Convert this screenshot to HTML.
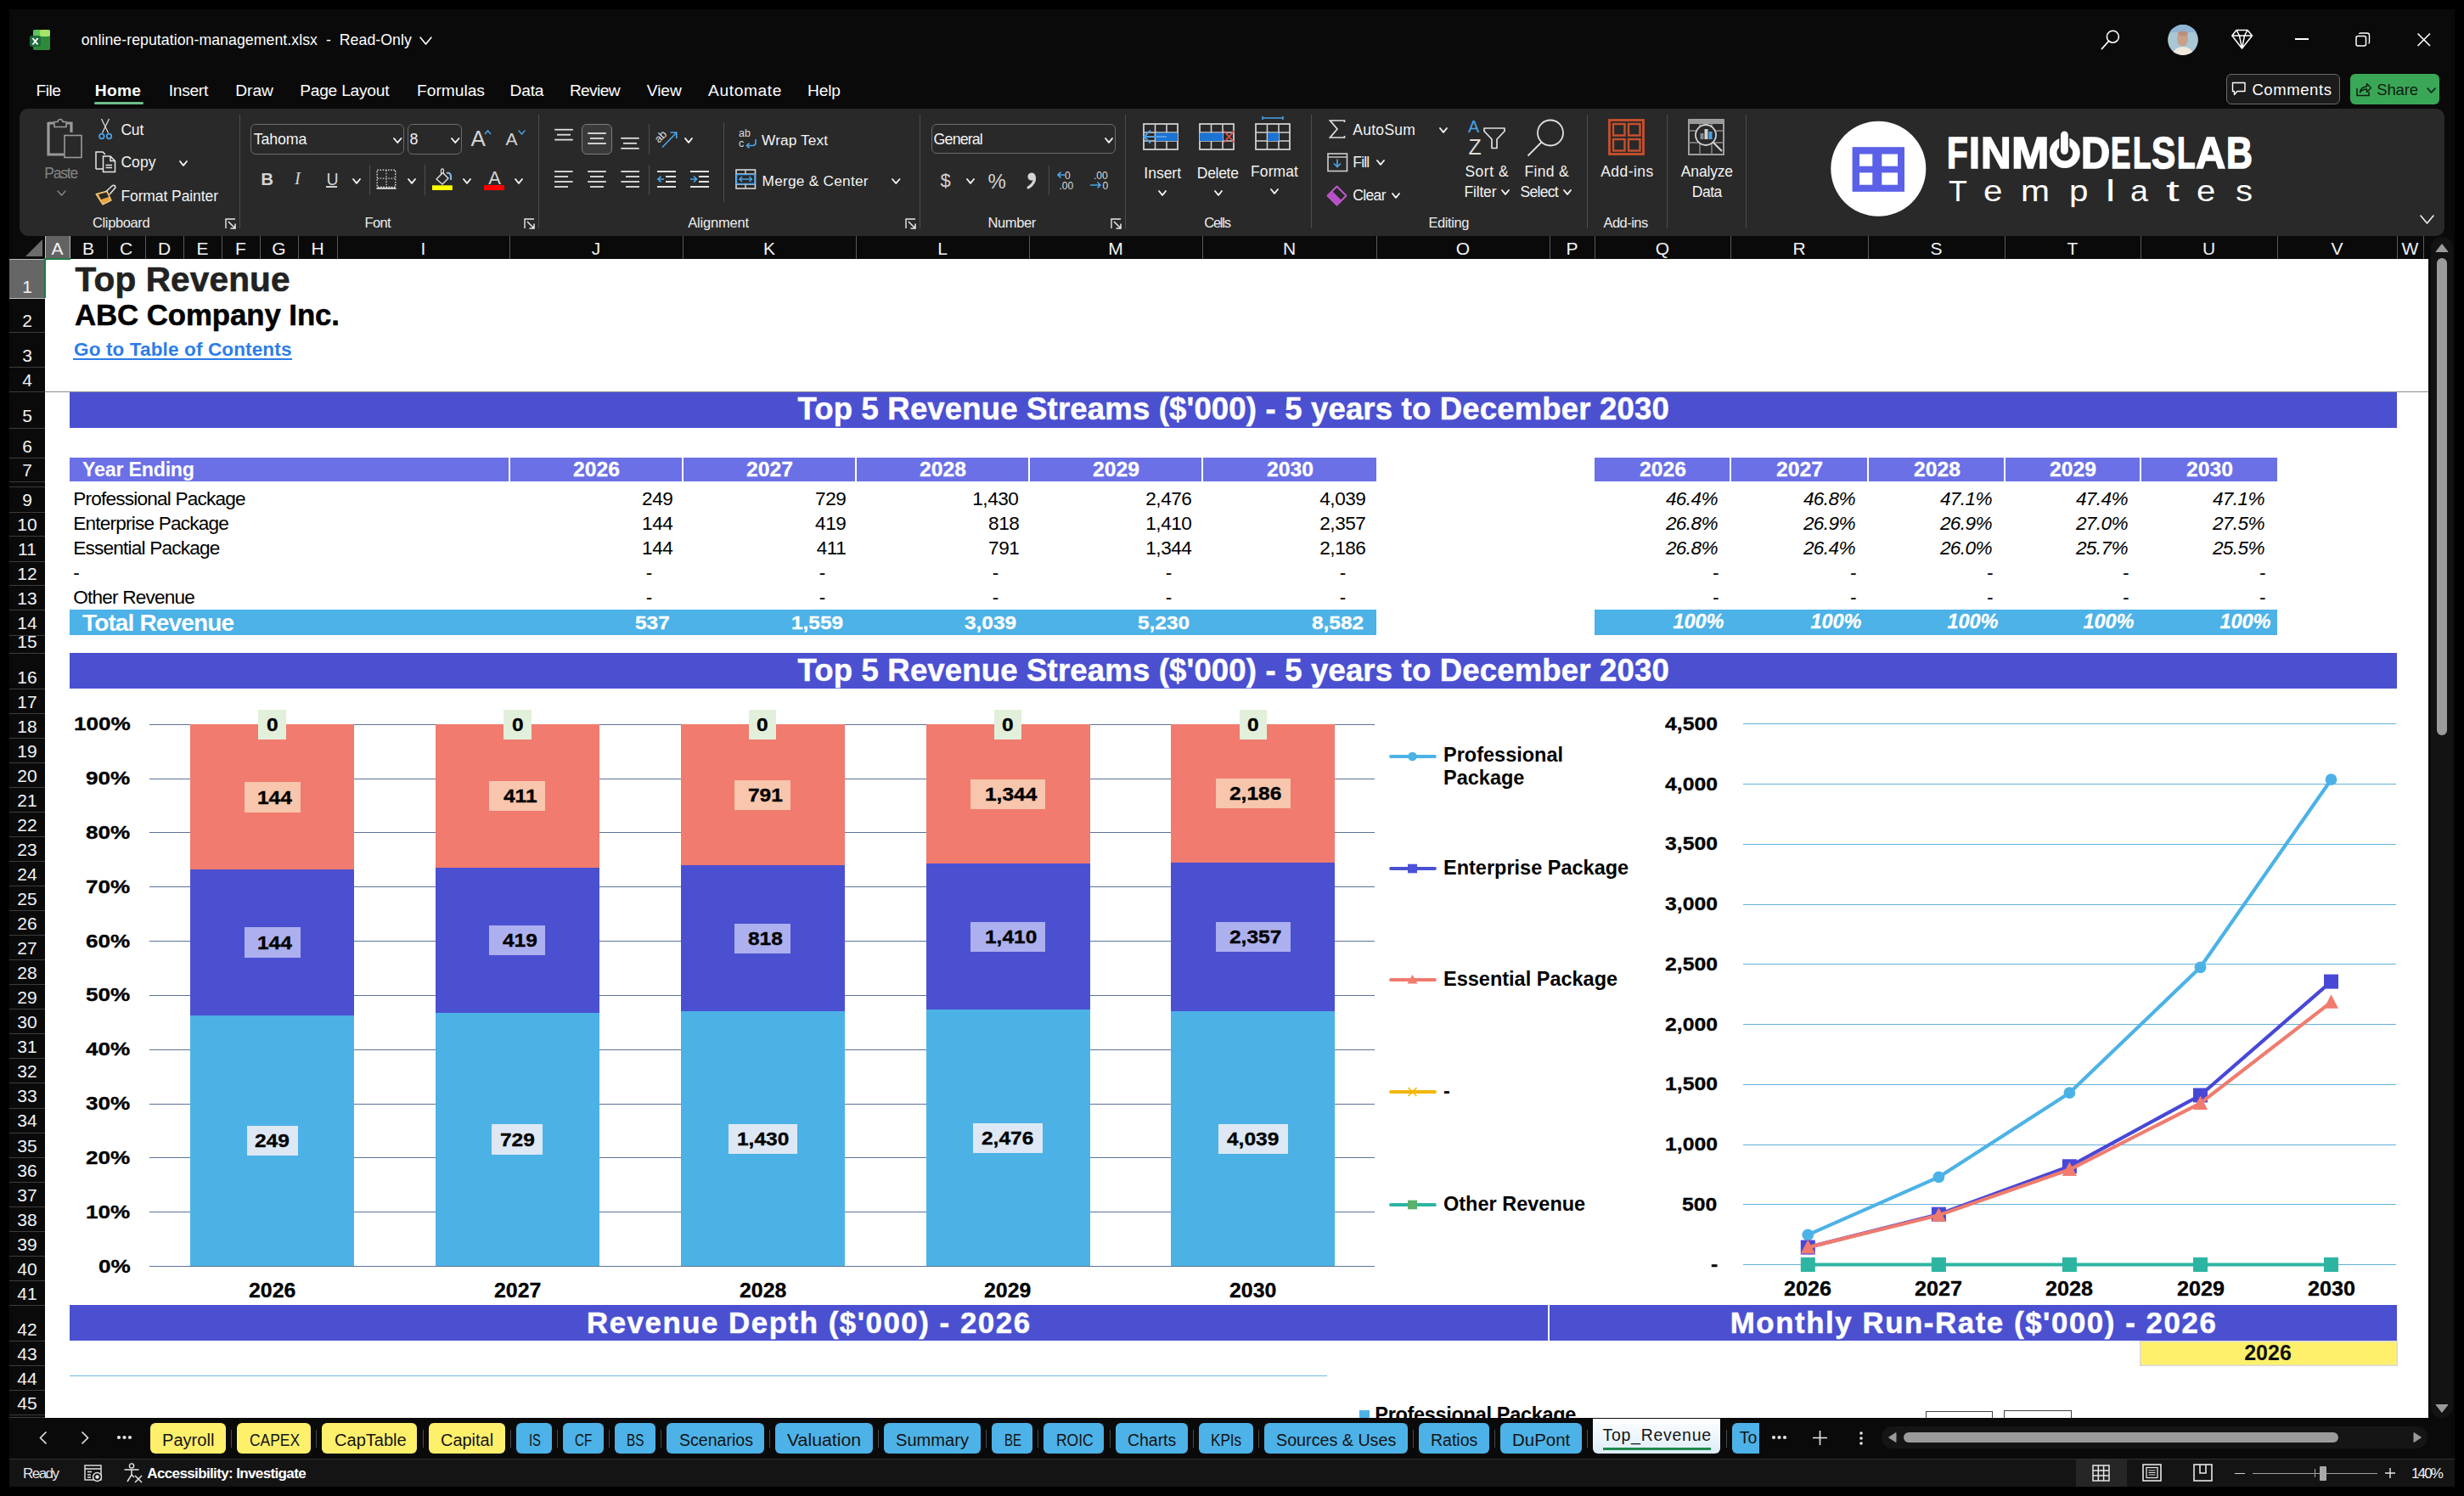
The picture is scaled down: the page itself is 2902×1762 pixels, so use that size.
<!DOCTYPE html>
<html><head><meta charset="utf-8"><title>Excel</title>
<style>
html,body{margin:0;padding:0;width:2902px;height:1762px;overflow:hidden;background:#000;}
.a{position:absolute;display:block;}
.t{white-space:pre;line-height:normal;}
svg.a{overflow:visible;}
</style></head><body>
<div class='a' style='left:11px;top:11px;width:2880px;height:1740px;background:#0a0a0a;'></div>
<div class='a' style='left:23px;top:128px;width:2856px;height:150px;background:#292929;border-radius:10px;'></div>
<div class='a' style='left:11px;top:278px;width:2849px;height:27px;background:#0a0a0a;'></div>
<div class='a' style='left:11px;top:305px;width:42px;height:1365px;background:#0a0a0a;'></div>
<div class='a' style='left:53px;top:305px;width:2807px;height:1365px;background:#ffffff;'></div>
<div class='a' style='left:2863px;top:279px;width:26px;height:1391px;background:#131313;border-radius:13px;'></div>
<div class='a' style='left:53px;top:278px;width:29px;height:27px;background:#636363;'></div>
<div class='a' style='left:82px;top:278px;width:1px;height:27px;background:#bdbdbd;'></div>
<span class="a t" style="left:60.5px;top:280.7px;font-family:'Liberation Sans', sans-serif;font-size:21px;font-weight:normal;font-style:normal;color:#f2f2f2;">A</span>
<div class='a' style='left:126px;top:278px;width:1px;height:27px;background:#5a5a5a;'></div>
<span class="a t" style="left:97.0px;top:280.7px;font-family:'Liberation Sans', sans-serif;font-size:21px;font-weight:normal;font-style:normal;color:#f2f2f2;">B</span>
<div class='a' style='left:171px;top:278px;width:1px;height:27px;background:#5a5a5a;'></div>
<span class="a t" style="left:140.9px;top:280.7px;font-family:'Liberation Sans', sans-serif;font-size:21px;font-weight:normal;font-style:normal;color:#f2f2f2;">C</span>
<div class='a' style='left:216px;top:278px;width:1px;height:27px;background:#5a5a5a;'></div>
<span class="a t" style="left:185.9px;top:280.7px;font-family:'Liberation Sans', sans-serif;font-size:21px;font-weight:normal;font-style:normal;color:#f2f2f2;">D</span>
<div class='a' style='left:261px;top:278px;width:1px;height:27px;background:#5a5a5a;'></div>
<span class="a t" style="left:231.5px;top:280.7px;font-family:'Liberation Sans', sans-serif;font-size:21px;font-weight:normal;font-style:normal;color:#f2f2f2;">E</span>
<div class='a' style='left:306px;top:278px;width:1px;height:27px;background:#5a5a5a;'></div>
<span class="a t" style="left:277.1px;top:280.7px;font-family:'Liberation Sans', sans-serif;font-size:21px;font-weight:normal;font-style:normal;color:#f2f2f2;">F</span>
<div class='a' style='left:351px;top:278px;width:1px;height:27px;background:#5a5a5a;'></div>
<span class="a t" style="left:320.3px;top:280.7px;font-family:'Liberation Sans', sans-serif;font-size:21px;font-weight:normal;font-style:normal;color:#f2f2f2;">G</span>
<div class='a' style='left:397px;top:278px;width:1px;height:27px;background:#5a5a5a;'></div>
<span class="a t" style="left:366.4px;top:280.7px;font-family:'Liberation Sans', sans-serif;font-size:21px;font-weight:normal;font-style:normal;color:#f2f2f2;">H</span>
<div class='a' style='left:600px;top:278px;width:1px;height:27px;background:#5a5a5a;'></div>
<span class="a t" style="left:495.6px;top:280.7px;font-family:'Liberation Sans', sans-serif;font-size:21px;font-weight:normal;font-style:normal;color:#f2f2f2;">I</span>
<div class='a' style='left:804px;top:278px;width:1px;height:27px;background:#5a5a5a;'></div>
<span class="a t" style="left:696.8px;top:280.7px;font-family:'Liberation Sans', sans-serif;font-size:21px;font-weight:normal;font-style:normal;color:#f2f2f2;">J</span>
<div class='a' style='left:1008px;top:278px;width:1px;height:27px;background:#5a5a5a;'></div>
<span class="a t" style="left:899.0px;top:280.7px;font-family:'Liberation Sans', sans-serif;font-size:21px;font-weight:normal;font-style:normal;color:#f2f2f2;">K</span>
<div class='a' style='left:1212px;top:278px;width:1px;height:27px;background:#5a5a5a;'></div>
<span class="a t" style="left:1104.2px;top:280.7px;font-family:'Liberation Sans', sans-serif;font-size:21px;font-weight:normal;font-style:normal;color:#f2f2f2;">L</span>
<div class='a' style='left:1416px;top:278px;width:1px;height:27px;background:#5a5a5a;'></div>
<span class="a t" style="left:1305.2px;top:280.7px;font-family:'Liberation Sans', sans-serif;font-size:21px;font-weight:normal;font-style:normal;color:#f2f2f2;">M</span>
<div class='a' style='left:1621px;top:278px;width:1px;height:27px;background:#5a5a5a;'></div>
<span class="a t" style="left:1510.9px;top:280.7px;font-family:'Liberation Sans', sans-serif;font-size:21px;font-weight:normal;font-style:normal;color:#f2f2f2;">N</span>
<div class='a' style='left:1825px;top:278px;width:1px;height:27px;background:#5a5a5a;'></div>
<span class="a t" style="left:1714.8px;top:280.7px;font-family:'Liberation Sans', sans-serif;font-size:21px;font-weight:normal;font-style:normal;color:#f2f2f2;">O</span>
<div class='a' style='left:1878px;top:278px;width:1px;height:27px;background:#5a5a5a;'></div>
<span class="a t" style="left:1844.5px;top:280.7px;font-family:'Liberation Sans', sans-serif;font-size:21px;font-weight:normal;font-style:normal;color:#f2f2f2;">P</span>
<div class='a' style='left:2038px;top:278px;width:1px;height:27px;background:#5a5a5a;'></div>
<span class="a t" style="left:1949.8px;top:280.7px;font-family:'Liberation Sans', sans-serif;font-size:21px;font-weight:normal;font-style:normal;color:#f2f2f2;">Q</span>
<div class='a' style='left:2200px;top:278px;width:1px;height:27px;background:#5a5a5a;'></div>
<span class="a t" style="left:2111.4px;top:280.7px;font-family:'Liberation Sans', sans-serif;font-size:21px;font-weight:normal;font-style:normal;color:#f2f2f2;">R</span>
<div class='a' style='left:2361px;top:278px;width:1px;height:27px;background:#5a5a5a;'></div>
<span class="a t" style="left:2273.5px;top:280.7px;font-family:'Liberation Sans', sans-serif;font-size:21px;font-weight:normal;font-style:normal;color:#f2f2f2;">S</span>
<div class='a' style='left:2521px;top:278px;width:1px;height:27px;background:#5a5a5a;'></div>
<span class="a t" style="left:2434.6px;top:280.7px;font-family:'Liberation Sans', sans-serif;font-size:21px;font-weight:normal;font-style:normal;color:#f2f2f2;">T</span>
<div class='a' style='left:2682px;top:278px;width:1px;height:27px;background:#5a5a5a;'></div>
<span class="a t" style="left:2593.9px;top:280.7px;font-family:'Liberation Sans', sans-serif;font-size:21px;font-weight:normal;font-style:normal;color:#f2f2f2;">U</span>
<div class='a' style='left:2823px;top:278px;width:1px;height:27px;background:#5a5a5a;'></div>
<span class="a t" style="left:2745.5px;top:280.7px;font-family:'Liberation Sans', sans-serif;font-size:21px;font-weight:normal;font-style:normal;color:#f2f2f2;">V</span>
<div class='a' style='left:2854px;top:278px;width:1px;height:27px;background:#5a5a5a;'></div>
<span class="a t" style="left:2828.6px;top:280.7px;font-family:'Liberation Sans', sans-serif;font-size:21px;font-weight:normal;font-style:normal;color:#f2f2f2;">W</span>
<div class='a' style='left:53px;top:278px;width:1px;height:27px;background:#bdbdbd;'></div>
<svg class='a' style='left:30px;top:282px;' width='21' height='21' viewBox='0 0 21 21'><polygon points='20,0 20,20 0,20' fill='#6b6b6b'/></svg>
<div class='a' style='left:11px;top:305px;width:42px;height:46px;background:#666666;'></div>
<div class='a' style='left:11px;top:351px;width:42px;height:1px;background:#bdbdbd;'></div>
<span class="a t" style="left:26.2px;top:325.9px;font-family:'Liberation Sans', sans-serif;font-size:21px;font-weight:normal;font-style:normal;color:#f2f2f2;">1</span>
<div class='a' style='left:11px;top:391px;width:42px;height:1px;background:#3c3c3c;'></div>
<span class="a t" style="left:26.2px;top:365.9px;font-family:'Liberation Sans', sans-serif;font-size:21px;font-weight:normal;font-style:normal;color:#f2f2f2;">2</span>
<div class='a' style='left:11px;top:432px;width:42px;height:1px;background:#3c3c3c;'></div>
<span class="a t" style="left:26.2px;top:406.9px;font-family:'Liberation Sans', sans-serif;font-size:21px;font-weight:normal;font-style:normal;color:#f2f2f2;">3</span>
<div class='a' style='left:11px;top:461px;width:42px;height:1px;background:#3c3c3c;'></div>
<span class="a t" style="left:26.2px;top:435.9px;font-family:'Liberation Sans', sans-serif;font-size:21px;font-weight:normal;font-style:normal;color:#f2f2f2;">4</span>
<div class='a' style='left:11px;top:503.5px;width:42px;height:1px;background:#3c3c3c;'></div>
<span class="a t" style="left:26.2px;top:478.4px;font-family:'Liberation Sans', sans-serif;font-size:21px;font-weight:normal;font-style:normal;color:#f2f2f2;">5</span>
<div class='a' style='left:11px;top:539px;width:42px;height:1px;background:#3c3c3c;'></div>
<span class="a t" style="left:26.2px;top:513.9px;font-family:'Liberation Sans', sans-serif;font-size:21px;font-weight:normal;font-style:normal;color:#f2f2f2;">6</span>
<div class='a' style='left:11px;top:567.3px;width:42px;height:1px;background:#3c3c3c;'></div>
<span class="a t" style="left:26.2px;top:542.2px;font-family:'Liberation Sans', sans-serif;font-size:21px;font-weight:normal;font-style:normal;color:#f2f2f2;">7</span>
<div class='a' style='left:11px;top:573.3px;width:42px;height:1px;background:#3c3c3c;'></div>
<div class='a' style='left:11px;top:602.5px;width:42px;height:1px;background:#3c3c3c;'></div>
<span class="a t" style="left:26.2px;top:577.4px;font-family:'Liberation Sans', sans-serif;font-size:21px;font-weight:normal;font-style:normal;color:#f2f2f2;">9</span>
<div class='a' style='left:11px;top:631.4px;width:42px;height:1px;background:#3c3c3c;'></div>
<span class="a t" style="left:20.3px;top:606.3px;font-family:'Liberation Sans', sans-serif;font-size:21px;font-weight:normal;font-style:normal;color:#f2f2f2;">10</span>
<div class='a' style='left:11px;top:660.5px;width:42px;height:1px;background:#3c3c3c;'></div>
<span class="a t" style="left:21.1px;top:635.4px;font-family:'Liberation Sans', sans-serif;font-size:21px;font-weight:normal;font-style:normal;color:#f2f2f2;">11</span>
<div class='a' style='left:11px;top:689.2px;width:42px;height:1px;background:#3c3c3c;'></div>
<span class="a t" style="left:20.3px;top:664.1px;font-family:'Liberation Sans', sans-serif;font-size:21px;font-weight:normal;font-style:normal;color:#f2f2f2;">12</span>
<div class='a' style='left:11px;top:718.2px;width:42px;height:1px;background:#3c3c3c;'></div>
<span class="a t" style="left:20.3px;top:693.1px;font-family:'Liberation Sans', sans-serif;font-size:21px;font-weight:normal;font-style:normal;color:#f2f2f2;">13</span>
<div class='a' style='left:11px;top:747.5px;width:42px;height:1px;background:#3c3c3c;'></div>
<span class="a t" style="left:20.3px;top:722.4px;font-family:'Liberation Sans', sans-serif;font-size:21px;font-weight:normal;font-style:normal;color:#f2f2f2;">14</span>
<div class='a' style='left:11px;top:769.4px;width:42px;height:1px;background:#3c3c3c;'></div>
<span class="a t" style="left:20.3px;top:744.3px;font-family:'Liberation Sans', sans-serif;font-size:21px;font-weight:normal;font-style:normal;color:#f2f2f2;">15</span>
<div class='a' style='left:11px;top:811px;width:42px;height:1px;background:#3c3c3c;'></div>
<span class="a t" style="left:20.3px;top:785.9px;font-family:'Liberation Sans', sans-serif;font-size:21px;font-weight:normal;font-style:normal;color:#f2f2f2;">16</span>
<div class='a' style='left:11px;top:840.03px;width:42px;height:1px;background:#3c3c3c;'></div>
<span class="a t" style="left:20.3px;top:814.9px;font-family:'Liberation Sans', sans-serif;font-size:21px;font-weight:normal;font-style:normal;color:#f2f2f2;">17</span>
<div class='a' style='left:11px;top:869.06px;width:42px;height:1px;background:#3c3c3c;'></div>
<span class="a t" style="left:20.3px;top:843.9px;font-family:'Liberation Sans', sans-serif;font-size:21px;font-weight:normal;font-style:normal;color:#f2f2f2;">18</span>
<div class='a' style='left:11px;top:898.09px;width:42px;height:1px;background:#3c3c3c;'></div>
<span class="a t" style="left:20.3px;top:873.0px;font-family:'Liberation Sans', sans-serif;font-size:21px;font-weight:normal;font-style:normal;color:#f2f2f2;">19</span>
<div class='a' style='left:11px;top:927.12px;width:42px;height:1px;background:#3c3c3c;'></div>
<span class="a t" style="left:20.3px;top:902.0px;font-family:'Liberation Sans', sans-serif;font-size:21px;font-weight:normal;font-style:normal;color:#f2f2f2;">20</span>
<div class='a' style='left:11px;top:956.15px;width:42px;height:1px;background:#3c3c3c;'></div>
<span class="a t" style="left:20.3px;top:931.0px;font-family:'Liberation Sans', sans-serif;font-size:21px;font-weight:normal;font-style:normal;color:#f2f2f2;">21</span>
<div class='a' style='left:11px;top:985.1800000000001px;width:42px;height:1px;background:#3c3c3c;'></div>
<span class="a t" style="left:20.3px;top:960.1px;font-family:'Liberation Sans', sans-serif;font-size:21px;font-weight:normal;font-style:normal;color:#f2f2f2;">22</span>
<div class='a' style='left:11px;top:1014.21px;width:42px;height:1px;background:#3c3c3c;'></div>
<span class="a t" style="left:20.3px;top:989.1px;font-family:'Liberation Sans', sans-serif;font-size:21px;font-weight:normal;font-style:normal;color:#f2f2f2;">23</span>
<div class='a' style='left:11px;top:1043.24px;width:42px;height:1px;background:#3c3c3c;'></div>
<span class="a t" style="left:20.3px;top:1018.1px;font-family:'Liberation Sans', sans-serif;font-size:21px;font-weight:normal;font-style:normal;color:#f2f2f2;">24</span>
<div class='a' style='left:11px;top:1072.27px;width:42px;height:1px;background:#3c3c3c;'></div>
<span class="a t" style="left:20.3px;top:1047.2px;font-family:'Liberation Sans', sans-serif;font-size:21px;font-weight:normal;font-style:normal;color:#f2f2f2;">25</span>
<div class='a' style='left:11px;top:1101.3px;width:42px;height:1px;background:#3c3c3c;'></div>
<span class="a t" style="left:20.3px;top:1076.2px;font-family:'Liberation Sans', sans-serif;font-size:21px;font-weight:normal;font-style:normal;color:#f2f2f2;">26</span>
<div class='a' style='left:11px;top:1130.33px;width:42px;height:1px;background:#3c3c3c;'></div>
<span class="a t" style="left:20.3px;top:1105.2px;font-family:'Liberation Sans', sans-serif;font-size:21px;font-weight:normal;font-style:normal;color:#f2f2f2;">27</span>
<div class='a' style='left:11px;top:1159.3600000000001px;width:42px;height:1px;background:#3c3c3c;'></div>
<span class="a t" style="left:20.3px;top:1134.2px;font-family:'Liberation Sans', sans-serif;font-size:21px;font-weight:normal;font-style:normal;color:#f2f2f2;">28</span>
<div class='a' style='left:11px;top:1188.3899999999999px;width:42px;height:1px;background:#3c3c3c;'></div>
<span class="a t" style="left:20.3px;top:1163.3px;font-family:'Liberation Sans', sans-serif;font-size:21px;font-weight:normal;font-style:normal;color:#f2f2f2;">29</span>
<div class='a' style='left:11px;top:1217.42px;width:42px;height:1px;background:#3c3c3c;'></div>
<span class="a t" style="left:20.3px;top:1192.3px;font-family:'Liberation Sans', sans-serif;font-size:21px;font-weight:normal;font-style:normal;color:#f2f2f2;">30</span>
<div class='a' style='left:11px;top:1246.45px;width:42px;height:1px;background:#3c3c3c;'></div>
<span class="a t" style="left:20.3px;top:1221.3px;font-family:'Liberation Sans', sans-serif;font-size:21px;font-weight:normal;font-style:normal;color:#f2f2f2;">31</span>
<div class='a' style='left:11px;top:1275.48px;width:42px;height:1px;background:#3c3c3c;'></div>
<span class="a t" style="left:20.3px;top:1250.4px;font-family:'Liberation Sans', sans-serif;font-size:21px;font-weight:normal;font-style:normal;color:#f2f2f2;">32</span>
<div class='a' style='left:11px;top:1304.51px;width:42px;height:1px;background:#3c3c3c;'></div>
<span class="a t" style="left:20.3px;top:1279.4px;font-family:'Liberation Sans', sans-serif;font-size:21px;font-weight:normal;font-style:normal;color:#f2f2f2;">33</span>
<div class='a' style='left:11px;top:1333.54px;width:42px;height:1px;background:#3c3c3c;'></div>
<span class="a t" style="left:20.3px;top:1308.4px;font-family:'Liberation Sans', sans-serif;font-size:21px;font-weight:normal;font-style:normal;color:#f2f2f2;">34</span>
<div class='a' style='left:11px;top:1362.5700000000002px;width:42px;height:1px;background:#3c3c3c;'></div>
<span class="a t" style="left:20.3px;top:1337.5px;font-family:'Liberation Sans', sans-serif;font-size:21px;font-weight:normal;font-style:normal;color:#f2f2f2;">35</span>
<div class='a' style='left:11px;top:1391.6px;width:42px;height:1px;background:#3c3c3c;'></div>
<span class="a t" style="left:20.3px;top:1366.5px;font-family:'Liberation Sans', sans-serif;font-size:21px;font-weight:normal;font-style:normal;color:#f2f2f2;">36</span>
<div class='a' style='left:11px;top:1420.63px;width:42px;height:1px;background:#3c3c3c;'></div>
<span class="a t" style="left:20.3px;top:1395.5px;font-family:'Liberation Sans', sans-serif;font-size:21px;font-weight:normal;font-style:normal;color:#f2f2f2;">37</span>
<div class='a' style='left:11px;top:1449.66px;width:42px;height:1px;background:#3c3c3c;'></div>
<span class="a t" style="left:20.3px;top:1424.5px;font-family:'Liberation Sans', sans-serif;font-size:21px;font-weight:normal;font-style:normal;color:#f2f2f2;">38</span>
<div class='a' style='left:11px;top:1478.69px;width:42px;height:1px;background:#3c3c3c;'></div>
<span class="a t" style="left:20.3px;top:1453.6px;font-family:'Liberation Sans', sans-serif;font-size:21px;font-weight:normal;font-style:normal;color:#f2f2f2;">39</span>
<div class='a' style='left:11px;top:1507.72px;width:42px;height:1px;background:#3c3c3c;'></div>
<span class="a t" style="left:20.3px;top:1482.6px;font-family:'Liberation Sans', sans-serif;font-size:21px;font-weight:normal;font-style:normal;color:#f2f2f2;">40</span>
<div class='a' style='left:11px;top:1536.75px;width:42px;height:1px;background:#3c3c3c;'></div>
<span class="a t" style="left:20.3px;top:1511.6px;font-family:'Liberation Sans', sans-serif;font-size:21px;font-weight:normal;font-style:normal;color:#f2f2f2;">41</span>
<div class='a' style='left:11px;top:1579px;width:42px;height:1px;background:#3c3c3c;'></div>
<span class="a t" style="left:20.3px;top:1553.9px;font-family:'Liberation Sans', sans-serif;font-size:21px;font-weight:normal;font-style:normal;color:#f2f2f2;">42</span>
<div class='a' style='left:11px;top:1608.3px;width:42px;height:1px;background:#3c3c3c;'></div>
<span class="a t" style="left:20.3px;top:1583.2px;font-family:'Liberation Sans', sans-serif;font-size:21px;font-weight:normal;font-style:normal;color:#f2f2f2;">43</span>
<div class='a' style='left:11px;top:1637.4px;width:42px;height:1px;background:#3c3c3c;'></div>
<span class="a t" style="left:20.3px;top:1612.3px;font-family:'Liberation Sans', sans-serif;font-size:21px;font-weight:normal;font-style:normal;color:#f2f2f2;">44</span>
<div class='a' style='left:11px;top:1666.3px;width:42px;height:1px;background:#3c3c3c;'></div>
<span class="a t" style="left:20.3px;top:1641.2px;font-family:'Liberation Sans', sans-serif;font-size:21px;font-weight:normal;font-style:normal;color:#f2f2f2;">45</span>
<div class='a' style='left:11px;top:1669px;width:42px;height:1px;background:#3c3c3c;'></div>
<div class='a' style='left:11px;top:304.5px;width:42px;height:1px;background:#bdbdbd;'></div>
<div class='a' style='left:52px;top:304px;width:2px;height:47px;background:#1f7a45;'></div>
<div class='a' style='left:52px;top:304px;width:31px;height:2px;background:#1f7a45;'></div>
<div class='a' style='left:53px;top:461px;width:2807px;height:1px;background:#8c8c8c;'></div>
<span class="a t" style="left:88.6px;top:305.6px;font-family:'Liberation Sans', sans-serif;font-size:40.6px;font-weight:bold;font-style:normal;color:#222222;letter-spacing:0.12px;-webkit-text-stroke:0.6px #222;">Top Revenue</span>
<span class="a t" style="left:88.0px;top:351.3px;font-family:'Liberation Sans', sans-serif;font-size:34.8px;font-weight:bold;font-style:normal;color:#000000;letter-spacing:-0.08px;-webkit-text-stroke:0.5px #000;">ABC Company Inc.</span>
<span class="a t" style="left:87.0px;top:399.1px;font-family:'Liberation Sans', sans-serif;font-size:22.5px;font-weight:bold;font-style:normal;color:#2b7de8;letter-spacing:0.14px;">Go to Table of Contents</span>
<div class='a' style='left:86px;top:422.3px;width:257.5px;height:2px;background:#2b7de8;'></div>
<div class='a' style='left:82px;top:461.7px;width:2741px;height:42px;background:#4b50d1;'></div>
<span class="a t" style="left:939.5px;top:461.2px;font-family:'Liberation Sans', sans-serif;font-size:36.5px;font-weight:bold;font-style:normal;color:#ffffff;letter-spacing:0.18px;-webkit-text-stroke:0.5px #fff;">Top 5 Revenue Streams ($'000) - 5 years to December 2030</span>
<div class='a' style='left:82px;top:539.2px;width:1539px;height:27.6px;background:#6b70e6;'></div>
<div class='a' style='left:1878px;top:539.2px;width:804px;height:27.6px;background:#6b70e6;'></div>
<div class='a' style='left:599px;top:539.2px;width:2px;height:27.6px;background:#ffffff;'></div>
<div class='a' style='left:803px;top:539.2px;width:2px;height:27.6px;background:#ffffff;'></div>
<div class='a' style='left:1007px;top:539.2px;width:2px;height:27.6px;background:#ffffff;'></div>
<div class='a' style='left:1211px;top:539.2px;width:2px;height:27.6px;background:#ffffff;'></div>
<div class='a' style='left:1415px;top:539.2px;width:2px;height:27.6px;background:#ffffff;'></div>
<div class='a' style='left:2037px;top:539.2px;width:2px;height:27.6px;background:#ffffff;'></div>
<div class='a' style='left:2199px;top:539.2px;width:2px;height:27.6px;background:#ffffff;'></div>
<div class='a' style='left:2360px;top:539.2px;width:2px;height:27.6px;background:#ffffff;'></div>
<div class='a' style='left:2520px;top:539.2px;width:2px;height:27.6px;background:#ffffff;'></div>
<span class="a t" style="left:97.0px;top:539.5px;font-family:'Liberation Sans', sans-serif;font-size:23.3px;font-weight:bold;font-style:normal;color:#ffffff;letter-spacing:-0.26px;">Year Ending</span>
<span class="a t" style="left:675.0px;top:539.5px;font-family:'Liberation Sans', sans-serif;font-size:23.3px;font-weight:bold;font-style:normal;color:#ffffff;transform:scaleX(1.0600);transform-origin:0 0;-webkit-text-stroke:0.3px #fff;">2026</span>
<span class="a t" style="left:879.0px;top:539.5px;font-family:'Liberation Sans', sans-serif;font-size:23.3px;font-weight:bold;font-style:normal;color:#ffffff;transform:scaleX(1.0600);transform-origin:0 0;-webkit-text-stroke:0.3px #fff;">2027</span>
<span class="a t" style="left:1083.0px;top:539.5px;font-family:'Liberation Sans', sans-serif;font-size:23.3px;font-weight:bold;font-style:normal;color:#ffffff;transform:scaleX(1.0600);transform-origin:0 0;-webkit-text-stroke:0.3px #fff;">2028</span>
<span class="a t" style="left:1287.0px;top:539.5px;font-family:'Liberation Sans', sans-serif;font-size:23.3px;font-weight:bold;font-style:normal;color:#ffffff;transform:scaleX(1.0600);transform-origin:0 0;-webkit-text-stroke:0.3px #fff;">2029</span>
<span class="a t" style="left:1491.5px;top:539.5px;font-family:'Liberation Sans', sans-serif;font-size:23.3px;font-weight:bold;font-style:normal;color:#ffffff;transform:scaleX(1.0600);transform-origin:0 0;-webkit-text-stroke:0.3px #fff;">2030</span>
<span class="a t" style="left:1931.0px;top:539.5px;font-family:'Liberation Sans', sans-serif;font-size:23.3px;font-weight:bold;font-style:normal;color:#ffffff;transform:scaleX(1.0600);transform-origin:0 0;-webkit-text-stroke:0.3px #fff;">2026</span>
<span class="a t" style="left:2092.0px;top:539.5px;font-family:'Liberation Sans', sans-serif;font-size:23.3px;font-weight:bold;font-style:normal;color:#ffffff;transform:scaleX(1.0600);transform-origin:0 0;-webkit-text-stroke:0.3px #fff;">2027</span>
<span class="a t" style="left:2253.5px;top:539.5px;font-family:'Liberation Sans', sans-serif;font-size:23.3px;font-weight:bold;font-style:normal;color:#ffffff;transform:scaleX(1.0600);transform-origin:0 0;-webkit-text-stroke:0.3px #fff;">2028</span>
<span class="a t" style="left:2414.0px;top:539.5px;font-family:'Liberation Sans', sans-serif;font-size:23.3px;font-weight:bold;font-style:normal;color:#ffffff;transform:scaleX(1.0600);transform-origin:0 0;-webkit-text-stroke:0.3px #fff;">2029</span>
<span class="a t" style="left:2574.5px;top:539.5px;font-family:'Liberation Sans', sans-serif;font-size:23.3px;font-weight:bold;font-style:normal;color:#ffffff;transform:scaleX(1.0600);transform-origin:0 0;-webkit-text-stroke:0.3px #fff;">2030</span>
<span class="a t" style="left:86.2px;top:574.9px;font-family:'Liberation Sans', sans-serif;font-size:22.6px;font-weight:normal;font-style:normal;color:#000000;letter-spacing:-0.8px;">Professional Package</span>
<span class="a t" style="left:756.1px;top:574.9px;font-family:'Liberation Sans', sans-serif;font-size:22.6px;font-weight:normal;font-style:normal;color:#000000;letter-spacing:-0.5px;">249</span>
<span class="a t" style="left:960.1px;top:574.9px;font-family:'Liberation Sans', sans-serif;font-size:22.6px;font-weight:normal;font-style:normal;color:#000000;letter-spacing:-0.5px;">729</span>
<span class="a t" style="left:1145.3px;top:574.9px;font-family:'Liberation Sans', sans-serif;font-size:22.6px;font-weight:normal;font-style:normal;color:#000000;letter-spacing:-0.5px;">1,430</span>
<span class="a t" style="left:1349.3px;top:574.9px;font-family:'Liberation Sans', sans-serif;font-size:22.6px;font-weight:normal;font-style:normal;color:#000000;letter-spacing:-0.5px;">2,476</span>
<span class="a t" style="left:1554.3px;top:574.9px;font-family:'Liberation Sans', sans-serif;font-size:22.6px;font-weight:normal;font-style:normal;color:#000000;letter-spacing:-0.5px;">4,039</span>
<span class="a t" style="left:1961.9px;top:574.9px;font-family:'Liberation Sans', sans-serif;font-size:22.6px;font-weight:normal;font-style:italic;color:#000000;letter-spacing:-0.6px;">46.4%</span>
<span class="a t" style="left:2123.9px;top:574.9px;font-family:'Liberation Sans', sans-serif;font-size:22.6px;font-weight:normal;font-style:italic;color:#000000;letter-spacing:-0.6px;">46.8%</span>
<span class="a t" style="left:2284.9px;top:574.9px;font-family:'Liberation Sans', sans-serif;font-size:22.6px;font-weight:normal;font-style:italic;color:#000000;letter-spacing:-0.6px;">47.1%</span>
<span class="a t" style="left:2444.9px;top:574.9px;font-family:'Liberation Sans', sans-serif;font-size:22.6px;font-weight:normal;font-style:italic;color:#000000;letter-spacing:-0.6px;">47.4%</span>
<span class="a t" style="left:2605.9px;top:574.9px;font-family:'Liberation Sans', sans-serif;font-size:22.6px;font-weight:normal;font-style:italic;color:#000000;letter-spacing:-0.6px;">47.1%</span>
<span class="a t" style="left:86.2px;top:603.8px;font-family:'Liberation Sans', sans-serif;font-size:22.6px;font-weight:normal;font-style:normal;color:#000000;letter-spacing:-0.8px;">Enterprise Package</span>
<span class="a t" style="left:756.1px;top:603.8px;font-family:'Liberation Sans', sans-serif;font-size:22.6px;font-weight:normal;font-style:normal;color:#000000;letter-spacing:-0.5px;">144</span>
<span class="a t" style="left:960.1px;top:603.8px;font-family:'Liberation Sans', sans-serif;font-size:22.6px;font-weight:normal;font-style:normal;color:#000000;letter-spacing:-0.5px;">419</span>
<span class="a t" style="left:1164.1px;top:603.8px;font-family:'Liberation Sans', sans-serif;font-size:22.6px;font-weight:normal;font-style:normal;color:#000000;letter-spacing:-0.5px;">818</span>
<span class="a t" style="left:1349.3px;top:603.8px;font-family:'Liberation Sans', sans-serif;font-size:22.6px;font-weight:normal;font-style:normal;color:#000000;letter-spacing:-0.5px;">1,410</span>
<span class="a t" style="left:1554.3px;top:603.8px;font-family:'Liberation Sans', sans-serif;font-size:22.6px;font-weight:normal;font-style:normal;color:#000000;letter-spacing:-0.5px;">2,357</span>
<span class="a t" style="left:1961.9px;top:603.8px;font-family:'Liberation Sans', sans-serif;font-size:22.6px;font-weight:normal;font-style:italic;color:#000000;letter-spacing:-0.6px;">26.8%</span>
<span class="a t" style="left:2123.9px;top:603.8px;font-family:'Liberation Sans', sans-serif;font-size:22.6px;font-weight:normal;font-style:italic;color:#000000;letter-spacing:-0.6px;">26.9%</span>
<span class="a t" style="left:2284.9px;top:603.8px;font-family:'Liberation Sans', sans-serif;font-size:22.6px;font-weight:normal;font-style:italic;color:#000000;letter-spacing:-0.6px;">26.9%</span>
<span class="a t" style="left:2444.9px;top:603.8px;font-family:'Liberation Sans', sans-serif;font-size:22.6px;font-weight:normal;font-style:italic;color:#000000;letter-spacing:-0.6px;">27.0%</span>
<span class="a t" style="left:2605.9px;top:603.8px;font-family:'Liberation Sans', sans-serif;font-size:22.6px;font-weight:normal;font-style:italic;color:#000000;letter-spacing:-0.6px;">27.5%</span>
<span class="a t" style="left:86.2px;top:632.9px;font-family:'Liberation Sans', sans-serif;font-size:22.6px;font-weight:normal;font-style:normal;color:#000000;letter-spacing:-0.8px;">Essential Package</span>
<span class="a t" style="left:756.1px;top:632.9px;font-family:'Liberation Sans', sans-serif;font-size:22.6px;font-weight:normal;font-style:normal;color:#000000;letter-spacing:-0.5px;">144</span>
<span class="a t" style="left:961.8px;top:632.9px;font-family:'Liberation Sans', sans-serif;font-size:22.6px;font-weight:normal;font-style:normal;color:#000000;letter-spacing:-0.5px;">411</span>
<span class="a t" style="left:1164.1px;top:632.9px;font-family:'Liberation Sans', sans-serif;font-size:22.6px;font-weight:normal;font-style:normal;color:#000000;letter-spacing:-0.5px;">791</span>
<span class="a t" style="left:1349.3px;top:632.9px;font-family:'Liberation Sans', sans-serif;font-size:22.6px;font-weight:normal;font-style:normal;color:#000000;letter-spacing:-0.5px;">1,344</span>
<span class="a t" style="left:1554.3px;top:632.9px;font-family:'Liberation Sans', sans-serif;font-size:22.6px;font-weight:normal;font-style:normal;color:#000000;letter-spacing:-0.5px;">2,186</span>
<span class="a t" style="left:1961.9px;top:632.9px;font-family:'Liberation Sans', sans-serif;font-size:22.6px;font-weight:normal;font-style:italic;color:#000000;letter-spacing:-0.6px;">26.8%</span>
<span class="a t" style="left:2123.9px;top:632.9px;font-family:'Liberation Sans', sans-serif;font-size:22.6px;font-weight:normal;font-style:italic;color:#000000;letter-spacing:-0.6px;">26.4%</span>
<span class="a t" style="left:2284.9px;top:632.9px;font-family:'Liberation Sans', sans-serif;font-size:22.6px;font-weight:normal;font-style:italic;color:#000000;letter-spacing:-0.6px;">26.0%</span>
<span class="a t" style="left:2444.9px;top:632.9px;font-family:'Liberation Sans', sans-serif;font-size:22.6px;font-weight:normal;font-style:italic;color:#000000;letter-spacing:-0.6px;">25.7%</span>
<span class="a t" style="left:2605.9px;top:632.9px;font-family:'Liberation Sans', sans-serif;font-size:22.6px;font-weight:normal;font-style:italic;color:#000000;letter-spacing:-0.6px;">25.5%</span>
<span class="a t" style="left:86.2px;top:661.6px;font-family:'Liberation Sans', sans-serif;font-size:22.6px;font-weight:normal;font-style:normal;color:#000000;letter-spacing:-0.8px;">-</span>
<span class="a t" style="left:760.7px;top:661.6px;font-family:'Liberation Sans', sans-serif;font-size:22.6px;font-weight:normal;font-style:normal;color:#000000;">-</span>
<span class="a t" style="left:964.7px;top:661.6px;font-family:'Liberation Sans', sans-serif;font-size:22.6px;font-weight:normal;font-style:normal;color:#000000;">-</span>
<span class="a t" style="left:1168.7px;top:661.6px;font-family:'Liberation Sans', sans-serif;font-size:22.6px;font-weight:normal;font-style:normal;color:#000000;">-</span>
<span class="a t" style="left:1372.7px;top:661.6px;font-family:'Liberation Sans', sans-serif;font-size:22.6px;font-weight:normal;font-style:normal;color:#000000;">-</span>
<span class="a t" style="left:1577.7px;top:661.6px;font-family:'Liberation Sans', sans-serif;font-size:22.6px;font-weight:normal;font-style:normal;color:#000000;">-</span>
<span class="a t" style="left:2016.7px;top:661.6px;font-family:'Liberation Sans', sans-serif;font-size:22.6px;font-weight:normal;font-style:italic;color:#000000;">-</span>
<span class="a t" style="left:2178.7px;top:661.6px;font-family:'Liberation Sans', sans-serif;font-size:22.6px;font-weight:normal;font-style:italic;color:#000000;">-</span>
<span class="a t" style="left:2339.7px;top:661.6px;font-family:'Liberation Sans', sans-serif;font-size:22.6px;font-weight:normal;font-style:italic;color:#000000;">-</span>
<span class="a t" style="left:2499.7px;top:661.6px;font-family:'Liberation Sans', sans-serif;font-size:22.6px;font-weight:normal;font-style:italic;color:#000000;">-</span>
<span class="a t" style="left:2660.7px;top:661.6px;font-family:'Liberation Sans', sans-serif;font-size:22.6px;font-weight:normal;font-style:italic;color:#000000;">-</span>
<span class="a t" style="left:86.2px;top:690.6px;font-family:'Liberation Sans', sans-serif;font-size:22.6px;font-weight:normal;font-style:normal;color:#000000;letter-spacing:-0.8px;">Other Revenue</span>
<span class="a t" style="left:760.7px;top:690.6px;font-family:'Liberation Sans', sans-serif;font-size:22.6px;font-weight:normal;font-style:normal;color:#000000;">-</span>
<span class="a t" style="left:964.7px;top:690.6px;font-family:'Liberation Sans', sans-serif;font-size:22.6px;font-weight:normal;font-style:normal;color:#000000;">-</span>
<span class="a t" style="left:1168.7px;top:690.6px;font-family:'Liberation Sans', sans-serif;font-size:22.6px;font-weight:normal;font-style:normal;color:#000000;">-</span>
<span class="a t" style="left:1372.7px;top:690.6px;font-family:'Liberation Sans', sans-serif;font-size:22.6px;font-weight:normal;font-style:normal;color:#000000;">-</span>
<span class="a t" style="left:1577.7px;top:690.6px;font-family:'Liberation Sans', sans-serif;font-size:22.6px;font-weight:normal;font-style:normal;color:#000000;">-</span>
<span class="a t" style="left:2016.7px;top:690.6px;font-family:'Liberation Sans', sans-serif;font-size:22.6px;font-weight:normal;font-style:italic;color:#000000;">-</span>
<span class="a t" style="left:2178.7px;top:690.6px;font-family:'Liberation Sans', sans-serif;font-size:22.6px;font-weight:normal;font-style:italic;color:#000000;">-</span>
<span class="a t" style="left:2339.7px;top:690.6px;font-family:'Liberation Sans', sans-serif;font-size:22.6px;font-weight:normal;font-style:italic;color:#000000;">-</span>
<span class="a t" style="left:2499.7px;top:690.6px;font-family:'Liberation Sans', sans-serif;font-size:22.6px;font-weight:normal;font-style:italic;color:#000000;">-</span>
<span class="a t" style="left:2660.7px;top:690.6px;font-family:'Liberation Sans', sans-serif;font-size:22.6px;font-weight:normal;font-style:italic;color:#000000;">-</span>
<div class='a' style='left:81.5px;top:718.1px;width:1539.5px;height:29.7px;background:#4cb2e7;'></div>
<div class='a' style='left:1878px;top:718.1px;width:804px;height:29.7px;background:#4cb2e7;'></div>
<span class="a t" style="left:97.0px;top:717.5px;font-family:'Liberation Sans', sans-serif;font-size:28px;font-weight:bold;font-style:normal;color:#ffffff;letter-spacing:-0.86px;">Total Revenue</span>
<span class="a t" style="left:748.0px;top:719.8px;font-family:'Liberation Sans', sans-serif;font-size:22.8px;font-weight:bold;font-style:normal;color:#ffffff;transform:scaleX(1.0700);transform-origin:0 0;-webkit-text-stroke:0.3px #fff;">537</span>
<span class="a t" style="left:931.6px;top:719.8px;font-family:'Liberation Sans', sans-serif;font-size:22.8px;font-weight:bold;font-style:normal;color:#ffffff;transform:scaleX(1.0700);transform-origin:0 0;-webkit-text-stroke:0.3px #fff;">1,559</span>
<span class="a t" style="left:1135.6px;top:719.8px;font-family:'Liberation Sans', sans-serif;font-size:22.8px;font-weight:bold;font-style:normal;color:#ffffff;transform:scaleX(1.0700);transform-origin:0 0;-webkit-text-stroke:0.3px #fff;">3,039</span>
<span class="a t" style="left:1339.6px;top:719.8px;font-family:'Liberation Sans', sans-serif;font-size:22.8px;font-weight:bold;font-style:normal;color:#ffffff;transform:scaleX(1.0700);transform-origin:0 0;-webkit-text-stroke:0.3px #fff;">5,230</span>
<span class="a t" style="left:1544.6px;top:719.8px;font-family:'Liberation Sans', sans-serif;font-size:22.8px;font-weight:bold;font-style:normal;color:#ffffff;transform:scaleX(1.0700);transform-origin:0 0;-webkit-text-stroke:0.3px #fff;">8,582</span>
<span class="a t" style="left:1970.4px;top:719.4px;font-family:'Liberation Sans', sans-serif;font-size:23.5px;font-weight:bold;font-style:italic;color:#ffffff;-webkit-text-stroke:0.3px #fff;">100%</span>
<span class="a t" style="left:2132.4px;top:719.4px;font-family:'Liberation Sans', sans-serif;font-size:23.5px;font-weight:bold;font-style:italic;color:#ffffff;-webkit-text-stroke:0.3px #fff;">100%</span>
<span class="a t" style="left:2293.4px;top:719.4px;font-family:'Liberation Sans', sans-serif;font-size:23.5px;font-weight:bold;font-style:italic;color:#ffffff;-webkit-text-stroke:0.3px #fff;">100%</span>
<span class="a t" style="left:2453.4px;top:719.4px;font-family:'Liberation Sans', sans-serif;font-size:23.5px;font-weight:bold;font-style:italic;color:#ffffff;-webkit-text-stroke:0.3px #fff;">100%</span>
<span class="a t" style="left:2614.4px;top:719.4px;font-family:'Liberation Sans', sans-serif;font-size:23.5px;font-weight:bold;font-style:italic;color:#ffffff;-webkit-text-stroke:0.3px #fff;">100%</span>
<div class='a' style='left:82px;top:769.4px;width:2741px;height:41.6px;background:#4b50d1;'></div>
<span class="a t" style="left:939.5px;top:768.7px;font-family:'Liberation Sans', sans-serif;font-size:36.5px;font-weight:bold;font-style:normal;color:#ffffff;letter-spacing:0.18px;-webkit-text-stroke:0.5px #fff;">Top 5 Revenue Streams ($'000) - 5 years to December 2030</span>
<div class='a' style='left:82px;top:1536.9px;width:2741px;height:42.2px;background:#4b50d1;'></div>
<div class='a' style='left:1823px;top:1536.9px;width:2px;height:42.2px;background:#ffffff;'></div>
<span class="a t" style="left:691.0px;top:1537.5px;font-family:'Liberation Sans', sans-serif;font-size:34.8px;font-weight:bold;font-style:normal;color:#ffffff;letter-spacing:1.55px;-webkit-text-stroke:0.5px #fff;">Revenue Depth ($'000) - 2026</span>
<span class="a t" style="left:2037.8px;top:1537.5px;font-family:'Liberation Sans', sans-serif;font-size:34.8px;font-weight:bold;font-style:normal;color:#ffffff;letter-spacing:1.58px;-webkit-text-stroke:0.5px #fff;">Monthly Run-Rate ($'000) - 2026</span>
<div class='a' style='left:2519.5px;top:1578.5px;width:304px;height:30px;background:#fff06b;box-shadow: inset 0 0 0 1.5px #d9d9d9;'></div>
<span class="a t" style="left:2643.2px;top:1579.0px;font-family:'Liberation Sans', sans-serif;font-size:25px;font-weight:bold;font-style:normal;color:#111111;">2026</span>
<div class='a' style='left:82px;top:1619.8px;width:1481px;height:1.2px;background:#6cbce0;'></div>
<div class='a' style='left:1600.8px;top:1661px;width:12px;height:9px;background:#4cb2e7;'></div>
<span class="a t" style="left:1619.3px;top:1652.6px;font-family:'Liberation Sans', sans-serif;font-size:23.5px;font-weight:bold;font-style:normal;color:#000000;letter-spacing:-0.31px;">Professional Package</span>
<div class='a' style='left:2268px;top:1662px;width:77px;height:20px;border:1.5px solid #444;background:#fff'></div>
<div class='a' style='left:2359.5px;top:1660.5px;width:78px;height:20px;border:1.5px solid #444;background:#fff'></div>
<div class='a' style='left:175.5px;top:853px;width:1443.5px;height:1px;background:#5b7399;'></div>
<div class='a' style='left:175.5px;top:917px;width:1443.5px;height:1px;background:#5b7399;'></div>
<div class='a' style='left:175.5px;top:980px;width:1443.5px;height:1px;background:#5b7399;'></div>
<div class='a' style='left:175.5px;top:1044px;width:1443.5px;height:1px;background:#5b7399;'></div>
<div class='a' style='left:175.5px;top:1108px;width:1443.5px;height:1px;background:#5b7399;'></div>
<div class='a' style='left:175.5px;top:1172px;width:1443.5px;height:1px;background:#5b7399;'></div>
<div class='a' style='left:175.5px;top:1236px;width:1443.5px;height:1px;background:#5b7399;'></div>
<div class='a' style='left:175.5px;top:1300px;width:1443.5px;height:1px;background:#5b7399;'></div>
<div class='a' style='left:175.5px;top:1363px;width:1443.5px;height:1px;background:#5b7399;'></div>
<div class='a' style='left:175.5px;top:1427px;width:1443.5px;height:1px;background:#5b7399;'></div>
<div class='a' style='left:175.5px;top:1491px;width:1443.5px;height:1px;background:#5b7399;'></div>
<span class="a t" style="left:86.7px;top:840.3px;font-family:'Liberation Sans', sans-serif;font-size:22.3px;font-weight:bold;font-style:normal;color:#000000;transform:scaleX(1.1700);transform-origin:0 0;-webkit-text-stroke:0.3px #000;">100%</span>
<span class="a t" style="left:101.2px;top:904.3px;font-family:'Liberation Sans', sans-serif;font-size:22.3px;font-weight:bold;font-style:normal;color:#000000;transform:scaleX(1.1700);transform-origin:0 0;-webkit-text-stroke:0.3px #000;">90%</span>
<span class="a t" style="left:101.2px;top:968.3px;font-family:'Liberation Sans', sans-serif;font-size:22.3px;font-weight:bold;font-style:normal;color:#000000;transform:scaleX(1.1700);transform-origin:0 0;-webkit-text-stroke:0.3px #000;">80%</span>
<span class="a t" style="left:101.2px;top:1032.3px;font-family:'Liberation Sans', sans-serif;font-size:22.3px;font-weight:bold;font-style:normal;color:#000000;transform:scaleX(1.1700);transform-origin:0 0;-webkit-text-stroke:0.3px #000;">70%</span>
<span class="a t" style="left:101.2px;top:1096.3px;font-family:'Liberation Sans', sans-serif;font-size:22.3px;font-weight:bold;font-style:normal;color:#000000;transform:scaleX(1.1700);transform-origin:0 0;-webkit-text-stroke:0.3px #000;">60%</span>
<span class="a t" style="left:101.2px;top:1159.3px;font-family:'Liberation Sans', sans-serif;font-size:22.3px;font-weight:bold;font-style:normal;color:#000000;transform:scaleX(1.1700);transform-origin:0 0;-webkit-text-stroke:0.3px #000;">50%</span>
<span class="a t" style="left:101.2px;top:1223.3px;font-family:'Liberation Sans', sans-serif;font-size:22.3px;font-weight:bold;font-style:normal;color:#000000;transform:scaleX(1.1700);transform-origin:0 0;-webkit-text-stroke:0.3px #000;">40%</span>
<span class="a t" style="left:101.2px;top:1287.3px;font-family:'Liberation Sans', sans-serif;font-size:22.3px;font-weight:bold;font-style:normal;color:#000000;transform:scaleX(1.1700);transform-origin:0 0;-webkit-text-stroke:0.3px #000;">30%</span>
<span class="a t" style="left:101.2px;top:1351.3px;font-family:'Liberation Sans', sans-serif;font-size:22.3px;font-weight:bold;font-style:normal;color:#000000;transform:scaleX(1.1700);transform-origin:0 0;-webkit-text-stroke:0.3px #000;">20%</span>
<span class="a t" style="left:101.2px;top:1415.3px;font-family:'Liberation Sans', sans-serif;font-size:22.3px;font-weight:bold;font-style:normal;color:#000000;transform:scaleX(1.1700);transform-origin:0 0;-webkit-text-stroke:0.3px #000;">10%</span>
<span class="a t" style="left:115.7px;top:1479.3px;font-family:'Liberation Sans', sans-serif;font-size:22.3px;font-weight:bold;font-style:normal;color:#000000;transform:scaleX(1.1700);transform-origin:0 0;-webkit-text-stroke:0.3px #000;">0%</span>
<div class='a' style='left:224.0px;top:1195.5748603351956px;width:193px;height:295.9251396648045px;background:#4cb2e6;'></div>
<div class='a' style='left:224.0px;top:1024.4374301675978px;width:193px;height:171.13743016759778px;background:#4b50d1;'></div>
<div class='a' style='left:224.0px;top:853.3px;width:193px;height:171.1374301675978px;background:#f07b6e;'></div>
<div class='a' style='left:290.5px;top:1325.737430167598px;width:60px;height:35.6px;background:#dde8f4;'></div>
<span class="a t" style="left:300.1px;top:1330.4px;font-family:'Liberation Sans', sans-serif;font-size:22.9px;font-weight:bold;font-style:normal;color:#000000;transform:scaleX(1.0700);transform-origin:0 0;-webkit-text-stroke:0.35px #000;">249</span>
<div class='a' style='left:287.5px;top:1092.2061452513967px;width:66px;height:35.6px;background:#adb0ef;'></div>
<span class="a t" style="left:303.3px;top:1096.8px;font-family:'Liberation Sans', sans-serif;font-size:22.9px;font-weight:bold;font-style:normal;color:#000000;transform:scaleX(1.0700);transform-origin:0 0;-webkit-text-stroke:0.35px #000;">144</span>
<div class='a' style='left:287.5px;top:921.0687150837989px;width:66px;height:35.6px;background:#f7c6ad;'></div>
<span class="a t" style="left:303.3px;top:925.7px;font-family:'Liberation Sans', sans-serif;font-size:22.9px;font-weight:bold;font-style:normal;color:#000000;transform:scaleX(1.0700);transform-origin:0 0;-webkit-text-stroke:0.35px #000;">144</span>
<div class='a' style='left:304.2px;top:835.5px;width:32.6px;height:35.6px;background:#e2efda;'></div>
<span class="a t" style="left:313.7px;top:840.1px;font-family:'Liberation Sans', sans-serif;font-size:22.9px;font-weight:bold;font-style:normal;color:#000000;transform:scaleX(1.0700);transform-origin:0 0;-webkit-text-stroke:0.35px #000;">0</span>
<span class="a t" style="left:292.9px;top:1506.8px;font-family:'Liberation Sans', sans-serif;font-size:23px;font-weight:bold;font-style:normal;color:#000000;transform:scaleX(1.0800);transform-origin:0 0;-webkit-text-stroke:0.3px #000;">2026</span>
<div class='a' style='left:512.85px;top:1193.0729313662605px;width:193px;height:298.4270686337396px;background:#4cb2e6;'></div>
<div class='a' style='left:512.85px;top:1021.5490057729314px;width:193px;height:171.5239255933291px;background:#4b50d1;'></div>
<div class='a' style='left:512.85px;top:853.3px;width:193px;height:168.24900577293147px;background:#f07b6e;'></div>
<div class='a' style='left:579.35px;top:1324.4864656831303px;width:60px;height:35.6px;background:#dde8f4;'></div>
<span class="a t" style="left:588.9px;top:1329.1px;font-family:'Liberation Sans', sans-serif;font-size:22.9px;font-weight:bold;font-style:normal;color:#000000;transform:scaleX(1.0700);transform-origin:0 0;-webkit-text-stroke:0.35px #000;">729</span>
<div class='a' style='left:576.35px;top:1089.510968569596px;width:66px;height:35.6px;background:#adb0ef;'></div>
<span class="a t" style="left:592.1px;top:1094.1px;font-family:'Liberation Sans', sans-serif;font-size:22.9px;font-weight:bold;font-style:normal;color:#000000;transform:scaleX(1.0700);transform-origin:0 0;-webkit-text-stroke:0.35px #000;">419</span>
<div class='a' style='left:576.35px;top:919.6245028864657px;width:66px;height:35.6px;background:#f7c6ad;'></div>
<span class="a t" style="left:592.8px;top:924.3px;font-family:'Liberation Sans', sans-serif;font-size:22.9px;font-weight:bold;font-style:normal;color:#000000;transform:scaleX(1.0700);transform-origin:0 0;-webkit-text-stroke:0.35px #000;">411</span>
<div class='a' style='left:593.0500000000001px;top:835.5px;width:32.6px;height:35.6px;background:#e2efda;'></div>
<span class="a t" style="left:602.5px;top:840.1px;font-family:'Liberation Sans', sans-serif;font-size:22.9px;font-weight:bold;font-style:normal;color:#000000;transform:scaleX(1.0700);transform-origin:0 0;-webkit-text-stroke:0.35px #000;">0</span>
<span class="a t" style="left:581.7px;top:1506.8px;font-family:'Liberation Sans', sans-serif;font-size:23px;font-weight:bold;font-style:normal;color:#000000;transform:scaleX(1.0800);transform-origin:0 0;-webkit-text-stroke:0.3px #000;">2027</span>
<div class='a' style='left:801.7px;top:1191.1952945047713px;width:193px;height:300.30470549522875px;background:#4cb2e6;'></div>
<div class='a' style='left:801.7px;top:1019.4126028298782px;width:193px;height:171.78269167489307px;background:#4b50d1;'></div>
<div class='a' style='left:801.7px;top:853.3px;width:193px;height:166.11260282987826px;background:#f07b6e;'></div>
<div class='a' style='left:857.5500000000001px;top:1323.5476472523858px;width:81.3px;height:35.6px;background:#dde8f4;'></div>
<span class="a t" style="left:867.5px;top:1328.2px;font-family:'Liberation Sans', sans-serif;font-size:22.9px;font-weight:bold;font-style:normal;color:#000000;transform:scaleX(1.0700);transform-origin:0 0;-webkit-text-stroke:0.35px #000;">1,430</span>
<div class='a' style='left:865.2px;top:1087.5039486673247px;width:66px;height:35.6px;background:#adb0ef;'></div>
<span class="a t" style="left:881.0px;top:1092.1px;font-family:'Liberation Sans', sans-serif;font-size:22.9px;font-weight:bold;font-style:normal;color:#000000;transform:scaleX(1.0700);transform-origin:0 0;-webkit-text-stroke:0.35px #000;">818</span>
<div class='a' style='left:865.2px;top:918.5563014149391px;width:66px;height:35.6px;background:#f7c6ad;'></div>
<span class="a t" style="left:881.0px;top:923.2px;font-family:'Liberation Sans', sans-serif;font-size:22.9px;font-weight:bold;font-style:normal;color:#000000;transform:scaleX(1.0700);transform-origin:0 0;-webkit-text-stroke:0.35px #000;">791</span>
<div class='a' style='left:881.9000000000001px;top:835.5px;width:32.6px;height:35.6px;background:#e2efda;'></div>
<span class="a t" style="left:891.4px;top:840.1px;font-family:'Liberation Sans', sans-serif;font-size:22.9px;font-weight:bold;font-style:normal;color:#000000;transform:scaleX(1.0700);transform-origin:0 0;-webkit-text-stroke:0.35px #000;">0</span>
<span class="a t" style="left:870.6px;top:1506.8px;font-family:'Liberation Sans', sans-serif;font-size:23px;font-weight:bold;font-style:normal;color:#000000;transform:scaleX(1.0800);transform-origin:0 0;-webkit-text-stroke:0.3px #000;">2028</span>
<div class='a' style='left:1090.5500000000002px;top:1189.3617208413002px;width:193px;height:302.13827915869985px;background:#4cb2e6;'></div>
<div class='a' style='left:1090.5500000000002px;top:1017.3039770554493px;width:193px;height:172.05774378585087px;background:#4b50d1;'></div>
<div class='a' style='left:1090.5500000000002px;top:853.3px;width:193px;height:164.00397705544935px;background:#f07b6e;'></div>
<div class='a' style='left:1146.4px;top:1322.6308604206502px;width:81.3px;height:35.6px;background:#dde8f4;'></div>
<span class="a t" style="left:1156.4px;top:1327.3px;font-family:'Liberation Sans', sans-serif;font-size:22.9px;font-weight:bold;font-style:normal;color:#000000;transform:scaleX(1.0700);transform-origin:0 0;-webkit-text-stroke:0.35px #000;">2,476</span>
<div class='a' style='left:1143.3000000000002px;top:1085.5328489483747px;width:87.5px;height:35.6px;background:#adb0ef;'></div>
<span class="a t" style="left:1159.6px;top:1090.2px;font-family:'Liberation Sans', sans-serif;font-size:22.9px;font-weight:bold;font-style:normal;color:#000000;transform:scaleX(1.0700);transform-origin:0 0;-webkit-text-stroke:0.35px #000;">1,410</span>
<div class='a' style='left:1143.3000000000002px;top:917.5019885277247px;width:87.5px;height:35.6px;background:#f7c6ad;'></div>
<span class="a t" style="left:1159.6px;top:922.1px;font-family:'Liberation Sans', sans-serif;font-size:22.9px;font-weight:bold;font-style:normal;color:#000000;transform:scaleX(1.0700);transform-origin:0 0;-webkit-text-stroke:0.35px #000;">1,344</span>
<div class='a' style='left:1170.7500000000002px;top:835.5px;width:32.6px;height:35.6px;background:#e2efda;'></div>
<span class="a t" style="left:1180.2px;top:840.1px;font-family:'Liberation Sans', sans-serif;font-size:22.9px;font-weight:bold;font-style:normal;color:#000000;transform:scaleX(1.0700);transform-origin:0 0;-webkit-text-stroke:0.35px #000;">0</span>
<span class="a t" style="left:1159.4px;top:1506.8px;font-family:'Liberation Sans', sans-serif;font-size:23px;font-weight:bold;font-style:normal;color:#000000;transform:scaleX(1.0800);transform-origin:0 0;-webkit-text-stroke:0.3px #000;">2029</span>
<div class='a' style='left:1379.4px;top:1191.1399673735725px;width:193px;height:300.3600326264274px;background:#4cb2e6;'></div>
<div class='a' style='left:1379.4px;top:1015.8617804707526px;width:193px;height:175.27818690281987px;background:#4b50d1;'></div>
<div class='a' style='left:1379.4px;top:853.3px;width:193px;height:162.56178047075264px;background:#f07b6e;'></div>
<div class='a' style='left:1435.25px;top:1323.5199836867862px;width:81.3px;height:35.6px;background:#dde8f4;'></div>
<span class="a t" style="left:1445.2px;top:1328.2px;font-family:'Liberation Sans', sans-serif;font-size:22.9px;font-weight:bold;font-style:normal;color:#000000;transform:scaleX(1.0700);transform-origin:0 0;-webkit-text-stroke:0.35px #000;">4,039</span>
<div class='a' style='left:1432.15px;top:1085.7008739221626px;width:87.5px;height:35.6px;background:#adb0ef;'></div>
<span class="a t" style="left:1448.4px;top:1090.3px;font-family:'Liberation Sans', sans-serif;font-size:22.9px;font-weight:bold;font-style:normal;color:#000000;transform:scaleX(1.0700);transform-origin:0 0;-webkit-text-stroke:0.35px #000;">2,357</span>
<div class='a' style='left:1432.15px;top:916.7808902353763px;width:87.5px;height:35.6px;background:#f7c6ad;'></div>
<span class="a t" style="left:1448.4px;top:921.4px;font-family:'Liberation Sans', sans-serif;font-size:22.9px;font-weight:bold;font-style:normal;color:#000000;transform:scaleX(1.0700);transform-origin:0 0;-webkit-text-stroke:0.35px #000;">2,186</span>
<div class='a' style='left:1459.6000000000001px;top:835.5px;width:32.6px;height:35.6px;background:#e2efda;'></div>
<span class="a t" style="left:1469.1px;top:840.1px;font-family:'Liberation Sans', sans-serif;font-size:22.9px;font-weight:bold;font-style:normal;color:#000000;transform:scaleX(1.0700);transform-origin:0 0;-webkit-text-stroke:0.35px #000;">0</span>
<span class="a t" style="left:1448.3px;top:1506.8px;font-family:'Liberation Sans', sans-serif;font-size:23px;font-weight:bold;font-style:normal;color:#000000;transform:scaleX(1.0800);transform-origin:0 0;-webkit-text-stroke:0.3px #000;">2030</span>
<svg class='a' style='left:1634.5px;top:880.7px;' width='60' height='20' viewBox='0 0 60 20'><line x1='3' y1='10' x2='55' y2='10' stroke='#4cb2e6' stroke-width='3.8' stroke-linecap='round'/><circle cx='28.5' cy='10' r='5.3' fill='#4cb2e6'/></svg>
<span class="a t" style="left:1700.0px;top:876.4px;font-family:'Liberation Sans', sans-serif;font-size:23.5px;font-weight:bold;font-style:normal;color:#000000;">Professional</span>
<svg class='a' style='left:1634.5px;top:1012.8px;' width='60' height='20' viewBox='0 0 60 20'><line x1='3' y1='10' x2='55' y2='10' stroke='#4b50d1' stroke-width='3.8' stroke-linecap='round'/><rect x='23' y='4.7' width='11' height='10.6' fill='#4b50d8'/></svg>
<span class="a t" style="left:1700.0px;top:1008.5px;font-family:'Liberation Sans', sans-serif;font-size:23.5px;font-weight:bold;font-style:normal;color:#000000;">Enterprise Package</span>
<svg class='a' style='left:1634.5px;top:1144.2px;' width='60' height='20' viewBox='0 0 60 20'><line x1='3' y1='10' x2='55' y2='10' stroke='#f07b6e' stroke-width='3.8' stroke-linecap='round'/><polygon points='28.5,4 34.5,14.5 22.5,14.5' fill='#f07b6e'/></svg>
<span class="a t" style="left:1700.0px;top:1139.9px;font-family:'Liberation Sans', sans-serif;font-size:23.5px;font-weight:bold;font-style:normal;color:#000000;">Essential Package</span>
<svg class='a' style='left:1634.5px;top:1276.4px;' width='60' height='20' viewBox='0 0 60 20'><line x1='3' y1='10' x2='55' y2='10' stroke='#f2b705' stroke-width='3.8' stroke-linecap='round'/><path d='M23.5,5 L33.5,15 M33.5,5 L23.5,15' stroke='#f2b705' stroke-width='1.6'/></svg>
<span class="a t" style="left:1700.0px;top:1272.1px;font-family:'Liberation Sans', sans-serif;font-size:23.5px;font-weight:bold;font-style:normal;color:#000000;">-</span>
<svg class='a' style='left:1634.5px;top:1409.2px;' width='60' height='20' viewBox='0 0 60 20'><line x1='3' y1='10' x2='55' y2='10' stroke='#2db5a2' stroke-width='3.8' stroke-linecap='round'/><rect x='23' y='4.7' width='11' height='10.6' fill='#5aaf6a'/></svg>
<span class="a t" style="left:1700.0px;top:1404.9px;font-family:'Liberation Sans', sans-serif;font-size:23.5px;font-weight:bold;font-style:normal;color:#000000;">Other Revenue</span>
<span class="a t" style="left:1700.0px;top:903.2px;font-family:'Liberation Sans', sans-serif;font-size:23.5px;font-weight:bold;font-style:normal;color:#000000;">Package</span>
<div class='a' style='left:2052.5px;top:852px;width:769.5px;height:1px;background:#62b1d9;'></div>
<div class='a' style='left:2052.5px;top:923px;width:769.5px;height:1px;background:#62b1d9;'></div>
<div class='a' style='left:2052.5px;top:994px;width:769.5px;height:1px;background:#62b1d9;'></div>
<div class='a' style='left:2052.5px;top:1065px;width:769.5px;height:1px;background:#62b1d9;'></div>
<div class='a' style='left:2052.5px;top:1135px;width:769.5px;height:1px;background:#62b1d9;'></div>
<div class='a' style='left:2052.5px;top:1206px;width:769.5px;height:1px;background:#62b1d9;'></div>
<div class='a' style='left:2052.5px;top:1277px;width:769.5px;height:1px;background:#62b1d9;'></div>
<div class='a' style='left:2052.5px;top:1348px;width:769.5px;height:1px;background:#62b1d9;'></div>
<div class='a' style='left:2052.5px;top:1418px;width:769.5px;height:1px;background:#62b1d9;'></div>
<div class='a' style='left:2052.5px;top:1489px;width:769.5px;height:1px;background:#62b1d9;'></div>
<span class="a t" style="left:1960.8px;top:840.1px;font-family:'Liberation Sans', sans-serif;font-size:22.5px;font-weight:bold;font-style:normal;color:#000000;transform:scaleX(1.1000);transform-origin:0 0;-webkit-text-stroke:0.3px #000;">4,500</span>
<span class="a t" style="left:1960.8px;top:911.1px;font-family:'Liberation Sans', sans-serif;font-size:22.5px;font-weight:bold;font-style:normal;color:#000000;transform:scaleX(1.1000);transform-origin:0 0;-webkit-text-stroke:0.3px #000;">4,000</span>
<span class="a t" style="left:1960.8px;top:981.1px;font-family:'Liberation Sans', sans-serif;font-size:22.5px;font-weight:bold;font-style:normal;color:#000000;transform:scaleX(1.1000);transform-origin:0 0;-webkit-text-stroke:0.3px #000;">3,500</span>
<span class="a t" style="left:1960.8px;top:1052.1px;font-family:'Liberation Sans', sans-serif;font-size:22.5px;font-weight:bold;font-style:normal;color:#000000;transform:scaleX(1.1000);transform-origin:0 0;-webkit-text-stroke:0.3px #000;">3,000</span>
<span class="a t" style="left:1960.8px;top:1123.1px;font-family:'Liberation Sans', sans-serif;font-size:22.5px;font-weight:bold;font-style:normal;color:#000000;transform:scaleX(1.1000);transform-origin:0 0;-webkit-text-stroke:0.3px #000;">2,500</span>
<span class="a t" style="left:1960.8px;top:1194.1px;font-family:'Liberation Sans', sans-serif;font-size:22.5px;font-weight:bold;font-style:normal;color:#000000;transform:scaleX(1.1000);transform-origin:0 0;-webkit-text-stroke:0.3px #000;">2,000</span>
<span class="a t" style="left:1960.8px;top:1264.1px;font-family:'Liberation Sans', sans-serif;font-size:22.5px;font-weight:bold;font-style:normal;color:#000000;transform:scaleX(1.1000);transform-origin:0 0;-webkit-text-stroke:0.3px #000;">1,500</span>
<span class="a t" style="left:1960.8px;top:1335.1px;font-family:'Liberation Sans', sans-serif;font-size:22.5px;font-weight:bold;font-style:normal;color:#000000;transform:scaleX(1.1000);transform-origin:0 0;-webkit-text-stroke:0.3px #000;">1,000</span>
<span class="a t" style="left:1981.4px;top:1406.1px;font-family:'Liberation Sans', sans-serif;font-size:22.5px;font-weight:bold;font-style:normal;color:#000000;transform:scaleX(1.1000);transform-origin:0 0;-webkit-text-stroke:0.3px #000;">500</span>
<span class="a t" style="left:2014.5px;top:1476.1px;font-family:'Liberation Sans', sans-serif;font-size:22.5px;font-weight:bold;font-style:normal;color:#000000;transform:scaleX(1.1000);transform-origin:0 0;-webkit-text-stroke:0.3px #000;">-</span>
<span class="a t" style="left:2101.3px;top:1504.8px;font-family:'Liberation Sans', sans-serif;font-size:23.3px;font-weight:bold;font-style:normal;color:#000000;transform:scaleX(1.0800);transform-origin:0 0;-webkit-text-stroke:0.3px #000;">2026</span>
<span class="a t" style="left:2255.4px;top:1504.8px;font-family:'Liberation Sans', sans-serif;font-size:23.3px;font-weight:bold;font-style:normal;color:#000000;transform:scaleX(1.0800);transform-origin:0 0;-webkit-text-stroke:0.3px #000;">2027</span>
<span class="a t" style="left:2409.4px;top:1504.8px;font-family:'Liberation Sans', sans-serif;font-size:23.3px;font-weight:bold;font-style:normal;color:#000000;transform:scaleX(1.0800);transform-origin:0 0;-webkit-text-stroke:0.3px #000;">2028</span>
<span class="a t" style="left:2563.5px;top:1504.8px;font-family:'Liberation Sans', sans-serif;font-size:23.3px;font-weight:bold;font-style:normal;color:#000000;transform:scaleX(1.0800);transform-origin:0 0;-webkit-text-stroke:0.3px #000;">2029</span>
<span class="a t" style="left:2717.5px;top:1504.8px;font-family:'Liberation Sans', sans-serif;font-size:23.3px;font-weight:bold;font-style:normal;color:#000000;transform:scaleX(1.0800);transform-origin:0 0;-webkit-text-stroke:0.3px #000;">2030</span>
<svg class='a' style='left:0;top:0' width='2902' height='1762'><polyline points='2129.3,1454.3 2283.4,1386.4 2437.4,1287.2 2591.5,1139.3 2745.5,918.2' fill='none' stroke='#4cb2e6' stroke-width='4.2' stroke-linejoin='round' stroke-linecap='round'/><circle cx='2129.3' cy='1454.3' r='6.9' fill='#4cb2e6'/><circle cx='2283.4' cy='1386.4' r='6.9' fill='#4cb2e6'/><circle cx='2437.4' cy='1287.2' r='6.9' fill='#4cb2e6'/><circle cx='2591.5' cy='1139.3' r='6.9' fill='#4cb2e6'/><circle cx='2745.5' cy='918.2' r='6.9' fill='#4cb2e6'/><polyline points='2129.3,1469.1 2283.4,1430.2 2437.4,1373.8 2591.5,1290.0 2745.5,1156.1' fill='none' stroke='#4848d6' stroke-width='4.2' stroke-linejoin='round' stroke-linecap='round'/><rect x='2120.8' y='1460.6' width='17' height='17' fill='#4848d6'/><rect x='2274.9' y='1421.7' width='17' height='17' fill='#4848d6'/><rect x='2428.9' y='1365.3' width='17' height='17' fill='#4848d6'/><rect x='2583.0' y='1281.5' width='17' height='17' fill='#4848d6'/><rect x='2737.0' y='1147.6' width='17' height='17' fill='#4848d6'/><polyline points='2129.3,1469.1 2283.4,1431.3 2437.4,1377.6 2591.5,1299.4 2745.5,1180.3' fill='none' stroke='#f07b6e' stroke-width='4.2' stroke-linejoin='round' stroke-linecap='round'/><polygon points='2129.3,1460.1 2137.8,1476.6 2120.8,1476.6' fill='#f07b6e'/><polygon points='2283.4,1422.3 2291.9,1438.8 2274.9,1438.8' fill='#f07b6e'/><polygon points='2437.4,1368.6 2445.9,1385.1 2428.9,1385.1' fill='#f07b6e'/><polygon points='2591.5,1290.4 2600.0,1306.9 2583.0,1306.9' fill='#f07b6e'/><polygon points='2745.5,1171.3 2754.0,1187.8 2737.0,1187.8' fill='#f07b6e'/><polyline points='2129.3,1489.5 2283.4,1489.5 2437.4,1489.5 2591.5,1489.5 2745.5,1489.5' fill='none' stroke='#2db5a2' stroke-width='4.2' stroke-linejoin='round' stroke-linecap='round'/><rect x='2120.8' y='1481.0' width='17' height='17' fill='#2db5a2'/><rect x='2274.9' y='1481.0' width='17' height='17' fill='#2db5a2'/><rect x='2428.9' y='1481.0' width='17' height='17' fill='#2db5a2'/><rect x='2583.0' y='1481.0' width='17' height='17' fill='#2db5a2'/><rect x='2737.0' y='1481.0' width='17' height='17' fill='#2db5a2'/></svg>
<svg class='a' style='left:34px;top:34px;' width='26' height='26' viewBox='0 0 26 26'><rect x='5' y='1' width='20' height='24' rx='2.5' fill='#2b7d35'/><rect x='5' y='1' width='10' height='8' rx='2' fill='#5bc45a'/><rect x='13' y='1' width='12' height='8' rx='2' fill='#a6e36a'/><rect x='5' y='9' width='20' height='16' rx='2' fill='#2d8a3a'/><rect x='1' y='8' width='13' height='13' rx='2.5' fill='#1f6b3a'/><path d='M4.5,11 L10.5,18.5 M10.5,11 L4.5,18.5' stroke='#ffffff' stroke-width='2'/></svg>
<span class="a t" style="left:95.7px;top:37.3px;font-family:'Liberation Sans', sans-serif;font-size:17.7px;font-weight:normal;font-style:normal;color:#ffffff;letter-spacing:0.06px;">online-reputation-management.xlsx  -  Read-Only</span>
<svg class='a' style='left:494px;top:43px;' width='15' height='10' viewBox='0 0 15 10'><path d='M1,1 L7.5,9 L14,1' fill='none' stroke='#ffffff' stroke-width='1.6' stroke-linecap='round' stroke-linejoin='round'/></svg>
<svg class='a' style='left:2472px;top:33px;' width='26' height='28' viewBox='0 0 26 28'><circle cx='16.4' cy='10.2' r='7' fill='none' stroke='#fff' stroke-width='1.6'/><path d='M11.5,15.5 L3.5,24.5' stroke='#fff' stroke-width='1.8' stroke-linecap='round'/></svg>
<svg class='a' style='left:2553px;top:29px;' width='36' height='36' viewBox='0 0 36 36'><defs><clipPath id='av'><circle cx='18' cy='18' r='17.9'/></clipPath></defs><g clip-path='url(#av)'><rect width='36' height='36' fill='#a9c7d4'/><rect width='36' height='9' fill='#8fb4d6'/><ellipse cx='17.5' cy='17' rx='6.5' ry='8.5' fill='#c9a08a'/><ellipse cx='18' cy='10.5' rx='6' ry='3' fill='#b88f7a'/><path d='M5,36 Q8,26 18,26 Q28,26 31,36 Z' fill='#efe8dd'/></g></svg>
<svg class='a' style='left:2628px;top:34px;' width='26' height='25' viewBox='0 0 26 25'><path d='M6,1.5 L19,1.5 L24.5,8 L12.5,23 L0.8,8 Z M0.8,8 L24.5,8 M6,1.5 L9.5,8 L12.5,23 L15.5,8 L19,1.5' fill='none' stroke='#fff' stroke-width='1.5' stroke-linejoin='round'/></svg>
<div class='a' style='left:2703px;top:45px;width:16px;height:1.6px;background:#ffffff;'></div>
<svg class='a' style='left:2774px;top:38px;' width='18' height='18' viewBox='0 0 18 18'><rect x='1' y='4.5' width='11.5' height='11.5' rx='2' fill='none' stroke='#fff' stroke-width='1.5'/><path d='M4.5,2 Q4.5,1 6,1 L14,1 Q16.5,1 16.5,3.5 L16.5,11.5 Q16.5,13 15.5,13' fill='none' stroke='#fff' stroke-width='1.4'/></svg>
<svg class='a' style='left:2846px;top:38px;' width='18' height='18' viewBox='0 0 18 18'><path d='M1.5,1.5 L16,16 M16,1.5 L1.5,16' stroke='#fff' stroke-width='1.6'/></svg>
<div class='a' style='left:2621.5px;top:87px;width:134px;height:35.7px;background:#1c1c1c;border:1.3px solid #6a6a6a;border-radius:6px;box-sizing:border-box;'></div>
<svg class='a' style='left:2628px;top:96px;' width='18' height='18' viewBox='0 0 18 18'><path d='M1.5,1.5 L16,1.5 L16,11.5 L7,11.5 L3.5,15.5 L3.5,11.5 L1.5,11.5 Z' fill='none' stroke='#fff' stroke-width='1.4' stroke-linejoin='round'/></svg>
<span class="a t" style="left:2652.4px;top:95.4px;font-family:'Liberation Sans', sans-serif;font-size:18.5px;font-weight:normal;font-style:normal;color:#ffffff;letter-spacing:0.59px;">Comments</span>
<div class='a' style='left:2768px;top:87px;width:105px;height:35.7px;background:#3aa757;border-radius:6px;'></div>
<svg class='a' style='left:2774px;top:95px;' width='20' height='20' viewBox='0 0 20 20'><path d='M2,9 L2,17.5 L16,17.5 L16,13' fill='none' stroke='#10210f' stroke-width='1.5'/><path d='M5.5,14 Q6.5,7 13.5,7 L13.5,3.5 L18.5,8.5 L13.5,13.5 L13.5,10 Q8,10 5.5,14 Z' fill='none' stroke='#10210f' stroke-width='1.4' stroke-linejoin='round'/></svg>
<span class="a t" style="left:2799.3px;top:95.4px;font-family:'Liberation Sans', sans-serif;font-size:18.5px;font-weight:normal;font-style:normal;color:#0d1f10;letter-spacing:-0.17px;">Share</span>
<svg class='a' style='left:2857.5px;top:102.5px;' width='11' height='7' viewBox='0 0 11 7'><path d='M1,1 L5.5,6 L10,1' fill='none' stroke='#0d1f10' stroke-width='1.6' stroke-linecap='round' stroke-linejoin='round'/></svg>
<span class="a t" style="left:42.6px;top:96.1px;font-family:'Liberation Sans', sans-serif;font-size:19.2px;font-weight:normal;font-style:normal;color:#ffffff;letter-spacing:-0.57px;">File</span>
<span class="a t" style="left:111.8px;top:96.1px;font-family:'Liberation Sans', sans-serif;font-size:19.2px;font-weight:bold;font-style:normal;color:#ffffff;letter-spacing:0.30px;">Home</span>
<span class="a t" style="left:198.8px;top:96.1px;font-family:'Liberation Sans', sans-serif;font-size:19.2px;font-weight:normal;font-style:normal;color:#ffffff;letter-spacing:-0.31px;">Insert</span>
<span class="a t" style="left:277.3px;top:96.1px;font-family:'Liberation Sans', sans-serif;font-size:19.2px;font-weight:normal;font-style:normal;color:#ffffff;letter-spacing:-0.03px;">Draw</span>
<span class="a t" style="left:353.2px;top:96.1px;font-family:'Liberation Sans', sans-serif;font-size:19.2px;font-weight:normal;font-style:normal;color:#ffffff;letter-spacing:-0.24px;">Page Layout</span>
<span class="a t" style="left:491.0px;top:96.1px;font-family:'Liberation Sans', sans-serif;font-size:19.2px;font-weight:normal;font-style:normal;color:#ffffff;">Formulas</span>
<span class="a t" style="left:600.6px;top:96.1px;font-family:'Liberation Sans', sans-serif;font-size:19.2px;font-weight:normal;font-style:normal;color:#ffffff;letter-spacing:-0.24px;">Data</span>
<span class="a t" style="left:670.9px;top:96.1px;font-family:'Liberation Sans', sans-serif;font-size:19.2px;font-weight:normal;font-style:normal;color:#ffffff;letter-spacing:-0.66px;">Review</span>
<span class="a t" style="left:761.8px;top:96.1px;font-family:'Liberation Sans', sans-serif;font-size:19.2px;font-weight:normal;font-style:normal;color:#ffffff;letter-spacing:-0.08px;">View</span>
<span class="a t" style="left:834.0px;top:96.1px;font-family:'Liberation Sans', sans-serif;font-size:19.2px;font-weight:normal;font-style:normal;color:#ffffff;letter-spacing:0.62px;">Automate</span>
<span class="a t" style="left:951.0px;top:96.1px;font-family:'Liberation Sans', sans-serif;font-size:19.2px;font-weight:normal;font-style:normal;color:#ffffff;letter-spacing:-0.16px;">Help</span>
<div class='a' style='left:110.7px;top:120px;width:58.2px;height:2.8px;background:#6cbf8a;border-radius:2px;'></div>
<svg class='a' style='left:54px;top:140px;' width='44' height='48' viewBox='0 0 44 48'><path d='M3,5 L9,5 M25,5 L30,5 L30,16' fill='none' stroke='#9a9a9a' stroke-width='3.2'/><path d='M3,4 L3,42 L21,42' fill='none' stroke='#9a9a9a' stroke-width='3.2'/><path d='M10,3.5 L10,9.5 L24,9.5 L24,3.5 L20,3.5 Q19.5,0.5 17,0.5 Q14.5,0.5 14,3.5 Z' fill='none' stroke='#9a9a9a' stroke-width='1.6'/><rect x='22' y='19.5' width='20' height='26' fill='none' stroke='#9a9a9a' stroke-width='1.6'/></svg>
<span class="a t" style="left:52.2px;top:193.6px;font-family:'Liberation Sans', sans-serif;font-size:17.5px;font-weight:normal;font-style:normal;color:#858585;letter-spacing:-1.19px;">Paste</span>
<svg class='a' style='left:67px;top:224px;' width='11' height='7' viewBox='0 0 11 7'><path d='M1,1 L5.5,6 L10,1' fill='none' stroke='#858585' stroke-width='1.5' stroke-linecap='round' stroke-linejoin='round'/></svg>
<svg class='a' style='left:116px;top:139px;' width='16' height='26' viewBox='0 0 16 26'><path d='M3.5,1 L11.5,17.5 M12.5,1 L4.5,17.5' stroke='#e6e6e6' stroke-width='1.2'/><circle cx='3.8' cy='21.5' r='2.8' fill='none' stroke='#4aa3e8' stroke-width='1.7'/><circle cx='12.5' cy='21.5' r='2.8' fill='none' stroke='#4aa3e8' stroke-width='1.7'/></svg>
<span class="a t" style="left:142.4px;top:142.9px;font-family:'Liberation Sans', sans-serif;font-size:17.5px;font-weight:normal;font-style:normal;color:#f3f3f3;letter-spacing:-0.17px;">Cut</span>
<svg class='a' style='left:111px;top:178px;' width='26' height='26' viewBox='0 0 26 26'><path d='M2,21 L2,1 L10,1 L13,4' fill='none' stroke='#e6e6e6' stroke-width='1.5'/><path d='M2,21 L10,21' stroke='#e6e6e6' stroke-width='1.5'/><path d='M10.5,24.5 L10.5,6 L19,6 L24.5,11.5 L24.5,24.5 Z M19,6 L19,11.5 L24.5,11.5' fill='none' stroke='#e6e6e6' stroke-width='1.5'/><path d='M13.5,16.5 L21,16.5 M13.5,19.5 L21,19.5' stroke='#e6e6e6' stroke-width='1.3'/></svg>
<span class="a t" style="left:142.4px;top:181.4px;font-family:'Liberation Sans', sans-serif;font-size:17.5px;font-weight:normal;font-style:normal;color:#f3f3f3;letter-spacing:0.08px;">Copy</span>
<svg class='a' style='left:211px;top:189px;' width='10' height='6.8' viewBox='0 0 10 6.8'><path d='M1,1 L5.0,5.8 L9,1' fill='none' stroke='#f3f3f3' stroke-width='1.9' stroke-linecap='round' stroke-linejoin='round'/></svg>
<svg class='a' style='left:111px;top:217px;' width='26' height='25' viewBox='0 0 26 25'><path d='M2,11.5 L15,8 L20,19 L10,24 Z' fill='#e9a53b' stroke='#f7d58c' stroke-width='1.2' stroke-linejoin='round'/><path d='M5,12 L14.5,9.5 L17,15 L8,18 Z' fill='#2a2a2a'/><path d='M14,8.5 L21,2 Q23,0.5 24.5,2 Q25.5,3.5 24,5 L18,12' fill='none' stroke='#e6e6e6' stroke-width='1.6'/></svg>
<span class="a t" style="left:142.4px;top:220.5px;font-family:'Liberation Sans', sans-serif;font-size:17.5px;font-weight:normal;font-style:normal;color:#f3f3f3;letter-spacing:-0.09px;">Format Painter</span>
<span class="a t" style="left:109.0px;top:252.5px;font-family:'Liberation Sans', sans-serif;font-size:16.5px;font-weight:normal;font-style:normal;color:#ededed;letter-spacing:-0.37px;">Clipboard</span>
<svg class='a' style='left:264.5px;top:256.5px;' width='13' height='13' viewBox='0 0 13 13'><path d='M1,12 L1,1 L12,1' fill='none' stroke='#e8e8e8' stroke-width='1.4'/><path d='M4,4 L12,12 M12,6.5 L12,12 L6.5,12' fill='none' stroke='#e8e8e8' stroke-width='1.6'/></svg>
<div class='a' style='left:282.2px;top:135px;width:1px;height:134px;background:#4d4d4d;'></div>
<div class='a' style='left:295.1px;top:146.2px;width:180.8px;height:35.6px;border:1.2px solid #6b6b6b;border-radius:6px;box-sizing:border-box;'></div>
<span class="a t" style="left:298.7px;top:153.9px;font-family:'Liberation Sans', sans-serif;font-size:17.8px;font-weight:normal;font-style:normal;color:#f3f3f3;letter-spacing:-0.11px;">Tahoma</span>
<svg class='a' style='left:463px;top:161.5px;' width='10.5' height='7' viewBox='0 0 10.5 7'><path d='M1,1 L5.25,6 L9.5,1' fill='none' stroke='#f3f3f3' stroke-width='1.9' stroke-linecap='round' stroke-linejoin='round'/></svg>
<div class='a' style='left:479.5px;top:146.2px;width:64.1px;height:35.6px;border:1.2px solid #6b6b6b;border-radius:6px;box-sizing:border-box;'></div>
<span class="a t" style="left:482.4px;top:153.9px;font-family:'Liberation Sans', sans-serif;font-size:17.8px;font-weight:normal;font-style:normal;color:#f3f3f3;">8</span>
<svg class='a' style='left:530.7px;top:161.5px;' width='10.5' height='7' viewBox='0 0 10.5 7'><path d='M1,1 L5.25,6 L9.5,1' fill='none' stroke='#f3f3f3' stroke-width='1.9' stroke-linecap='round' stroke-linejoin='round'/></svg>
<span class="a t" style="left:554.5px;top:147.8px;font-family:'Liberation Sans', sans-serif;font-size:26px;font-weight:normal;font-style:normal;color:#d4d4d4;">A</span>
<svg class='a' style='left:569.5px;top:153px;' width='9' height='6' viewBox='0 0 9 6'><path d='M1,5 L4.5,1 L8,5' fill='none' stroke='#4aa3e8' stroke-width='1.5'/></svg>
<span class="a t" style="left:595.5px;top:152.4px;font-family:'Liberation Sans', sans-serif;font-size:21px;font-weight:normal;font-style:normal;color:#d4d4d4;">A</span>
<svg class='a' style='left:609.5px;top:152.5px;' width='9' height='6' viewBox='0 0 9 6'><path d='M1,1 L4.5,5 L8,1' fill='none' stroke='#4aa3e8' stroke-width='1.4' stroke-linecap='round' stroke-linejoin='round'/></svg>
<span class="a t" style="left:307.3px;top:199.0px;font-family:'Liberation Sans', sans-serif;font-size:20.5px;font-weight:bold;font-style:normal;color:#d4d4d4;">B</span>
<span class="a t" style="left:347.0px;top:199.0px;font-family:'Liberation Serif', serif;font-size:20.5px;font-weight:normal;font-style:italic;color:#d4d4d4;">I</span>
<span class="a t" style="left:384.5px;top:200.0px;font-family:'Liberation Sans', sans-serif;font-size:19.5px;font-weight:normal;font-style:normal;color:#d4d4d4;">U</span>
<div class='a' style='left:383.7px;top:219.3px;width:13px;height:1.5px;background:#d4d4d4;'></div>
<svg class='a' style='left:414.7px;top:210px;' width='10' height='6.8' viewBox='0 0 10 6.8'><path d='M1,1 L5.0,5.8 L9,1' fill='none' stroke='#f3f3f3' stroke-width='1.9' stroke-linecap='round' stroke-linejoin='round'/></svg>
<div class='a' style='left:434.9px;top:194px;width:1px;height:36px;background:#4d4d4d;'></div>
<svg class='a' style='left:443px;top:199px;' width='25' height='25' viewBox='0 0 25 25'><rect x='1.2' y='1.2' width='21.5' height='20' fill='none' stroke='#cfcfcf' stroke-width='1.5' stroke-dasharray='1.6,1.6'/><path d='M12,1.5 L12,21 M1.5,11.2 L22.5,11.2' stroke='#cfcfcf' stroke-width='1.3' stroke-dasharray='1.6,1.6'/><path d='M0.5,22.8 L23.5,22.8' stroke='#e6e6e6' stroke-width='1.8'/></svg>
<svg class='a' style='left:480px;top:210px;' width='10' height='6.8' viewBox='0 0 10 6.8'><path d='M1,1 L5.0,5.8 L9,1' fill='none' stroke='#f3f3f3' stroke-width='1.9' stroke-linecap='round' stroke-linejoin='round'/></svg>
<div class='a' style='left:499.7px;top:194px;width:1px;height:36px;background:#4d4d4d;'></div>
<svg class='a' style='left:509px;top:198px;' width='25' height='27' viewBox='0 0 25 27'><path d='M5,13 L12.5,5.5 L19,12 L12,19 Z' fill='none' stroke='#d9d9d9' stroke-width='1.5' stroke-linejoin='round'/><path d='M10.5,7.5 L10.5,2.5 Q10.5,1 12,1 Q13.5,1 13.5,2.5 L13.5,7' fill='none' stroke='#d9d9d9' stroke-width='1.3'/><path d='M17,6 Q21,4.5 22,9 L22,14' fill='none' stroke='#7fb7e6' stroke-width='2.2'/><rect x='0' y='20.3' width='23.8' height='5.7' fill='#ffff00'/></svg>
<svg class='a' style='left:545px;top:210px;' width='10' height='6.8' viewBox='0 0 10 6.8'><path d='M1,1 L5.0,5.8 L9,1' fill='none' stroke='#f3f3f3' stroke-width='1.9' stroke-linecap='round' stroke-linejoin='round'/></svg>
<span class="a t" style="left:575.3px;top:196.8px;font-family:'Liberation Sans', sans-serif;font-size:22px;font-weight:normal;font-style:normal;color:#d4d4d4;">A</span>
<div class='a' style='left:570px;top:218.3px;width:24px;height:5.7px;background:#ff0000;'></div>
<svg class='a' style='left:606px;top:210px;' width='10' height='6.8' viewBox='0 0 10 6.8'><path d='M1,1 L5.0,5.8 L9,1' fill='none' stroke='#f3f3f3' stroke-width='1.9' stroke-linecap='round' stroke-linejoin='round'/></svg>
<span class="a t" style="left:429.5px;top:253.0px;font-family:'Liberation Sans', sans-serif;font-size:16.5px;font-weight:normal;font-style:normal;color:#ededed;letter-spacing:-0.68px;">Font</span>
<svg class='a' style='left:616.5px;top:256.5px;' width='13' height='13' viewBox='0 0 13 13'><path d='M1,12 L1,1 L12,1' fill='none' stroke='#e8e8e8' stroke-width='1.4'/><path d='M4,4 L12,12 M12,6.5 L12,12 L6.5,12' fill='none' stroke='#e8e8e8' stroke-width='1.6'/></svg>
<div class='a' style='left:633.7px;top:135px;width:1px;height:134px;background:#4d4d4d;'></div>
<svg class='a' style='left:653px;top:145px;' width='22' height='30' viewBox='0 0 22 30'><line x1='0.1999999999999993' y1='7.7' x2='21.8' y2='7.7' stroke='#e0e0e0' stroke-width='1.8'/><line x1='3.0' y1='13.7' x2='19.0' y2='13.7' stroke='#e0e0e0' stroke-width='1.8'/><line x1='0.1999999999999993' y1='19.6' x2='21.8' y2='19.6' stroke='#e0e0e0' stroke-width='1.8'/></svg>
<div class='a' style='left:685.3px;top:146.3px;width:35.4px;height:35.3px;background:#3a3a3a;border:1.2px solid #7c7c7c;border-radius:6px;box-sizing:border-box;'></div>
<svg class='a' style='left:692px;top:145px;' width='22' height='30' viewBox='0 0 22 30'><line x1='0.1999999999999993' y1='12' x2='21.8' y2='12' stroke='#e0e0e0' stroke-width='1.8'/><line x1='3.0' y1='18' x2='19.0' y2='18' stroke='#e0e0e0' stroke-width='1.8'/><line x1='0.1999999999999993' y1='24' x2='21.8' y2='24' stroke='#e0e0e0' stroke-width='1.8'/></svg>
<svg class='a' style='left:731.3px;top:145px;' width='22' height='30' viewBox='0 0 22 30'><line x1='0.3000000000000007' y1='17.8' x2='21.7' y2='17.8' stroke='#e0e0e0' stroke-width='1.8'/><line x1='3.0' y1='23.8' x2='19.0' y2='23.8' stroke='#e0e0e0' stroke-width='1.8'/><line x1='0.3000000000000007' y1='29.8' x2='21.7' y2='29.8' stroke='#e0e0e0' stroke-width='1.8'/></svg>
<div class='a' style='left:763.6px;top:146px;width:1px;height:35.599999999999994px;background:#4d4d4d;'></div>
<svg class='a' style='left:771px;top:150px;' width='28' height='26' viewBox='0 0 28 26'><text x='0' y='0' transform='translate(5,19) rotate(-45)' font-family='Liberation Sans' font-size='13' fill='#dcdcdc'>ab</text><path d='M9,23.5 L25.5,6.5 M18.5,6 L25.8,6 L25.8,13' fill='none' stroke='#4aa3e8' stroke-width='1.7'/></svg>
<svg class='a' style='left:805.5px;top:162px;' width='10' height='6.8' viewBox='0 0 10 6.8'><path d='M1,1 L5.0,5.8 L9,1' fill='none' stroke='#f3f3f3' stroke-width='1.9' stroke-linecap='round' stroke-linejoin='round'/></svg>
<div class='a' style='left:851.5px;top:144px;width:1px;height:94px;background:#4d4d4d;'></div>
<svg class='a' style='left:869px;top:151px;' width='24' height='26' viewBox='0 0 24 26'><text x='1' y='10' font-family='Liberation Sans' font-size='12.5' fill='#dcdcdc'>ab</text><text x='1' y='22' font-family='Liberation Sans' font-size='12.5' fill='#dcdcdc'>c</text><path d='M21,13 L21,17 Q21,20.5 17,20.5 L10.5,20.5 M13.5,17.5 L10.5,20.5 L13.5,23.5' fill='none' stroke='#4aa3e8' stroke-width='1.7'/></svg>
<span class="a t" style="left:897.1px;top:154.7px;font-family:'Liberation Sans', sans-serif;font-size:17.3px;font-weight:normal;font-style:normal;color:#f3f3f3;letter-spacing:0.10px;">Wrap Text</span>
<svg class='a' style='left:652.9px;top:195px;' width='22' height='30' viewBox='0 0 22 30'><line x1='0' y1='7' x2='21.6' y2='7' stroke='#e0e0e0' stroke-width='1.8'/><line x1='0' y1='13' x2='16' y2='13' stroke='#e0e0e0' stroke-width='1.8'/><line x1='0' y1='19' x2='21.6' y2='19' stroke='#e0e0e0' stroke-width='1.8'/><line x1='0' y1='25' x2='16' y2='25' stroke='#e0e0e0' stroke-width='1.8'/></svg>
<svg class='a' style='left:692px;top:195px;' width='22' height='30' viewBox='0 0 22 30'><line x1='0.1999999999999993' y1='7' x2='21.8' y2='7' stroke='#e0e0e0' stroke-width='1.8'/><line x1='3.0' y1='13' x2='19.0' y2='13' stroke='#e0e0e0' stroke-width='1.8'/><line x1='0.1999999999999993' y1='19' x2='21.8' y2='19' stroke='#e0e0e0' stroke-width='1.8'/><line x1='3.0' y1='25' x2='19.0' y2='25' stroke='#e0e0e0' stroke-width='1.8'/></svg>
<svg class='a' style='left:731.3px;top:195px;' width='22' height='30' viewBox='0 0 22 30'><line x1='0.3999999999999986' y1='7' x2='22.0' y2='7' stroke='#e0e0e0' stroke-width='1.8'/><line x1='6' y1='13' x2='22' y2='13' stroke='#e0e0e0' stroke-width='1.8'/><line x1='0.3999999999999986' y1='19' x2='22.0' y2='19' stroke='#e0e0e0' stroke-width='1.8'/><line x1='6' y1='25' x2='22' y2='25' stroke='#e0e0e0' stroke-width='1.8'/></svg>
<div class='a' style='left:763.6px;top:194px;width:1px;height:36px;background:#4d4d4d;'></div>
<svg class='a' style='left:774px;top:195px;' width='23' height='30' viewBox='0 0 23 30'><path d='M0,7 L22,7 M10,13 L22,13 M10,19 L22,19 M0,25 L22,25' stroke='#e0e0e0' stroke-width='1.8'/><path d='M8,16 L1,16 M4.5,12.5 L1,16 L4.5,19.5' fill='none' stroke='#4aa3e8' stroke-width='1.7'/></svg>
<svg class='a' style='left:813px;top:195px;' width='23' height='30' viewBox='0 0 23 30'><path d='M0,7 L22,7 M10,13 L22,13 M10,19 L22,19 M0,25 L22,25' stroke='#e0e0e0' stroke-width='1.8'/><path d='M0,16 L7.5,16 M4,12.5 L7.5,16 L4,19.5' fill='none' stroke='#4aa3e8' stroke-width='1.7'/></svg>
<svg class='a' style='left:866px;top:199px;' width='25' height='25' viewBox='0 0 25 25'><rect x='1' y='1' width='22.5' height='22' fill='none' stroke='#d9d9d9' stroke-width='1.6'/><path d='M1,6 L23.5,6 M1,18 L23.5,18 M12,1 L12,6 M12,18 L12,23' stroke='#d9d9d9' stroke-width='1.4'/><rect x='1.5' y='6.5' width='21.5' height='11' fill='none' stroke='#4aa3e8' stroke-width='1.5'/><path d='M5,12 L19.5,12 M8,9 L5,12 L8,15 M16.5,9 L19.5,12 L16.5,15' fill='none' stroke='#4aa3e8' stroke-width='1.5'/></svg>
<span class="a t" style="left:897.5px;top:203.1px;font-family:'Liberation Sans', sans-serif;font-size:17.3px;font-weight:normal;font-style:normal;color:#f3f3f3;letter-spacing:0.24px;">Merge &amp; Center</span>
<svg class='a' style='left:1050px;top:210px;' width='10.5' height='7' viewBox='0 0 10.5 7'><path d='M1,1 L5.25,6 L9.5,1' fill='none' stroke='#f3f3f3' stroke-width='1.9' stroke-linecap='round' stroke-linejoin='round'/></svg>
<span class="a t" style="left:810.2px;top:253.1px;font-family:'Liberation Sans', sans-serif;font-size:16.5px;font-weight:normal;font-style:normal;color:#ededed;letter-spacing:-0.20px;">Alignment</span>
<svg class='a' style='left:1065.5px;top:256.5px;' width='13' height='13' viewBox='0 0 13 13'><path d='M1,12 L1,1 L12,1' fill='none' stroke='#e8e8e8' stroke-width='1.4'/><path d='M4,4 L12,12 M12,6.5 L12,12 L6.5,12' fill='none' stroke='#e8e8e8' stroke-width='1.6'/></svg>
<div class='a' style='left:1082.8px;top:135px;width:1px;height:134px;background:#4d4d4d;'></div>
<div class='a' style='left:1096.6px;top:146.2px;width:217.1px;height:35.1px;border:1.2px solid #6b6b6b;border-radius:6px;box-sizing:border-box;'></div>
<span class="a t" style="left:1099.6px;top:154.4px;font-family:'Liberation Sans', sans-serif;font-size:17.8px;font-weight:normal;font-style:normal;color:#f3f3f3;letter-spacing:-0.84px;">General</span>
<svg class='a' style='left:1301px;top:162px;' width='10' height='6.8' viewBox='0 0 10 6.8'><path d='M1,1 L5.0,5.8 L9,1' fill='none' stroke='#f3f3f3' stroke-width='1.9' stroke-linecap='round' stroke-linejoin='round'/></svg>
<span class="a t" style="left:1107.4px;top:200.3px;font-family:'Liberation Sans', sans-serif;font-size:22px;font-weight:normal;font-style:normal;color:#d4d4d4;">$</span>
<svg class='a' style='left:1138px;top:209.7px;' width='10' height='6.8' viewBox='0 0 10 6.8'><path d='M1,1 L5.0,5.8 L9,1' fill='none' stroke='#f3f3f3' stroke-width='1.9' stroke-linecap='round' stroke-linejoin='round'/></svg>
<span class="a t" style="left:1163.4px;top:199.9px;font-family:'Liberation Sans', sans-serif;font-size:24px;font-weight:normal;font-style:normal;color:#d4d4d4;">%</span>
<svg class='a' style='left:1207px;top:201px;' width='16' height='22' viewBox='0 0 16 22'><circle cx='8' cy='7' r='4.6' fill='#d4d4d4'/><path d='M11.5,8 Q12,15 4,20' fill='none' stroke='#d4d4d4' stroke-width='3.2' stroke-linecap='round'/></svg>
<div class='a' style='left:1235.3px;top:194.7px;width:1px;height:35.5px;background:#4d4d4d;'></div>
<svg class='a' style='left:1244px;top:199px;' width='26' height='26' viewBox='0 0 26 26'><text x='10' y='12' font-family='Liberation Sans' font-size='12' fill='#dcdcdc'>0</text><text x='3.5' y='24' font-family='Liberation Sans' font-size='12' fill='#dcdcdc'>.00</text><path d='M10,7 L2,7 M5.5,3.5 L2,7 L5.5,10.5' fill='none' stroke='#4aa3e8' stroke-width='1.7'/></svg>
<svg class='a' style='left:1283px;top:199px;' width='26' height='26' viewBox='0 0 26 26'><text x='5' y='12' font-family='Liberation Sans' font-size='12' fill='#dcdcdc'>.00</text><text x='15.5' y='24' font-family='Liberation Sans' font-size='12' fill='#dcdcdc'>0</text><path d='M1,19 L13,19 M9.5,15.5 L13,19 L9.5,22.5' fill='none' stroke='#4aa3e8' stroke-width='1.7'/></svg>
<span class="a t" style="left:1163.4px;top:252.7px;font-family:'Liberation Sans', sans-serif;font-size:16.5px;font-weight:normal;font-style:normal;color:#ededed;letter-spacing:-0.36px;">Number</span>
<svg class='a' style='left:1308px;top:256.5px;' width='13' height='13' viewBox='0 0 13 13'><path d='M1,12 L1,1 L12,1' fill='none' stroke='#e8e8e8' stroke-width='1.4'/><path d='M4,4 L12,12 M12,6.5 L12,12 L6.5,12' fill='none' stroke='#e8e8e8' stroke-width='1.6'/></svg>
<div class='a' style='left:1325.4px;top:135px;width:1px;height:134px;background:#4d4d4d;'></div>
<svg class='a' style='left:1346px;top:145px;' width='45' height='34' viewBox='0 0 45 34'><rect x='1' y='1' width='40' height='30' fill='none' stroke='#cfcfcf' stroke-width='1.8'/><path d='M14.5,1 L14.5,31 M28,1 L28,31 M1,11 L41,11 M1,21 L41,21' stroke='#cfcfcf' stroke-width='1.6'/><rect x='15' y='11.5' width='26' height='9.5' fill='#1b73d3'/><path d='M15,16 L28,16' stroke='#9cc8f0' stroke-width='1'/><path d='M22,16 L2,16 M9,8.5 L1.5,16 L9,23.5' fill='none' stroke='#4da0e8' stroke-width='2'/></svg>
<span class="a t" style="left:1347.3px;top:193.6px;font-family:'Liberation Sans', sans-serif;font-size:17.5px;font-weight:normal;font-style:normal;color:#f3f3f3;">Insert</span>
<svg class='a' style='left:1364px;top:223.7px;' width='10' height='6.8' viewBox='0 0 10 6.8'><path d='M1,1 L5.0,5.8 L9,1' fill='none' stroke='#f3f3f3' stroke-width='1.9' stroke-linecap='round' stroke-linejoin='round'/></svg>
<svg class='a' style='left:1412px;top:145px;' width='45' height='34' viewBox='0 0 45 34'><rect x='1' y='1' width='40' height='30' fill='none' stroke='#cfcfcf' stroke-width='1.8'/><path d='M14.5,1 L14.5,31 M28,1 L28,31 M1,11 L41,11 M1,21 L41,21' stroke='#cfcfcf' stroke-width='1.6'/><rect x='1' y='11.5' width='27' height='9.5' fill='#1b73d3'/><path d='M29,9 L42,23 M42,9 L29,23' stroke='#e35151' stroke-width='1.8'/></svg>
<span class="a t" style="left:1409.8px;top:193.6px;font-family:'Liberation Sans', sans-serif;font-size:17.5px;font-weight:normal;font-style:normal;color:#f3f3f3;letter-spacing:-0.30px;">Delete</span>
<svg class='a' style='left:1430px;top:223.7px;' width='10' height='6.8' viewBox='0 0 10 6.8'><path d='M1,1 L5.0,5.8 L9,1' fill='none' stroke='#f3f3f3' stroke-width='1.9' stroke-linecap='round' stroke-linejoin='round'/></svg>
<svg class='a' style='left:1478px;top:137px;' width='45' height='42' viewBox='0 0 45 42'><g transform='translate(0,8)'><rect x='1' y='1' width='40' height='30' fill='none' stroke='#cfcfcf' stroke-width='1.8'/><path d='M14.5,1 L14.5,31 M28,1 L28,31 M1,11 L41,11 M1,21 L41,21' stroke='#cfcfcf' stroke-width='1.6'/><rect x='15' y='11.5' width='13' height='9.5' fill='#1b73d3'/></g><path d='M9,2 L33,2 M9,0 L9,4 M33,0 L33,4' stroke='#4aa3e8' stroke-width='1.5'/></svg>
<span class="a t" style="left:1473.0px;top:191.7px;font-family:'Liberation Sans', sans-serif;font-size:17.5px;font-weight:normal;font-style:normal;color:#f3f3f3;letter-spacing:0.11px;">Format</span>
<svg class='a' style='left:1496px;top:221.8px;' width='10' height='6.8' viewBox='0 0 10 6.8'><path d='M1,1 L5.0,5.8 L9,1' fill='none' stroke='#f3f3f3' stroke-width='1.9' stroke-linecap='round' stroke-linejoin='round'/></svg>
<span class="a t" style="left:1418.2px;top:253.3px;font-family:'Liberation Sans', sans-serif;font-size:16.5px;font-weight:normal;font-style:normal;color:#ededed;letter-spacing:-1.22px;">Cells</span>
<div class='a' style='left:1544.2px;top:135px;width:1px;height:134px;background:#4d4d4d;'></div>
<svg class='a' style='left:1565px;top:141px;' width='20' height='22' viewBox='0 0 20 22'><path d='M18.5,3 L18.5,1 L1.5,1 L10,11 L1.5,21 L18.5,21 L18.5,19' fill='none' stroke='#e0e0e0' stroke-width='1.7' stroke-linejoin='miter'/></svg>
<span class="a t" style="left:1593.3px;top:142.6px;font-family:'Liberation Sans', sans-serif;font-size:17.5px;font-weight:normal;font-style:normal;color:#f3f3f3;letter-spacing:0.27px;">AutoSum</span>
<svg class='a' style='left:1695px;top:150px;' width='10' height='6.8' viewBox='0 0 10 6.8'><path d='M1,1 L5.0,5.8 L9,1' fill='none' stroke='#f3f3f3' stroke-width='1.9' stroke-linecap='round' stroke-linejoin='round'/></svg>
<svg class='a' style='left:1563px;top:180px;' width='25' height='23' viewBox='0 0 25 23'><rect x='1' y='1' width='22.5' height='20.5' fill='none' stroke='#cfcfcf' stroke-width='1.6'/><path d='M1,5 L23.5,5' stroke='#cfcfcf' stroke-width='1.4'/><path d='M12,7.5 L12,16.5 M8,12.5 L12,16.5 L16,12.5' fill='none' stroke='#4aa3e8' stroke-width='1.7'/></svg>
<span class="a t" style="left:1593.3px;top:181.3px;font-family:'Liberation Sans', sans-serif;font-size:17.5px;font-weight:normal;font-style:normal;color:#f3f3f3;letter-spacing:-0.85px;">Fill</span>
<svg class='a' style='left:1620.7px;top:187.5px;' width='10' height='6.8' viewBox='0 0 10 6.8'><path d='M1,1 L5.0,5.8 L9,1' fill='none' stroke='#f3f3f3' stroke-width='1.9' stroke-linecap='round' stroke-linejoin='round'/></svg>
<svg class='a' style='left:1562px;top:218px;' width='25' height='25' viewBox='0 0 25 25'><path d='M12.5,1.5 L23.5,12.5 L12.5,23.5 L1.5,12.5 Z' fill='none' stroke='#c35bd0' stroke-width='1.8' stroke-linejoin='round'/><path d='M1.5,12.5 L7,7 L18,18 L12.5,23.5 Z' fill='#b84fc7'/></svg>
<span class="a t" style="left:1593.3px;top:220.4px;font-family:'Liberation Sans', sans-serif;font-size:17.5px;font-weight:normal;font-style:normal;color:#f3f3f3;letter-spacing:-0.66px;">Clear</span>
<svg class='a' style='left:1638.5px;top:226.5px;' width='10' height='6.8' viewBox='0 0 10 6.8'><path d='M1,1 L5.0,5.8 L9,1' fill='none' stroke='#f3f3f3' stroke-width='1.9' stroke-linecap='round' stroke-linejoin='round'/></svg>
<svg class='a' style='left:1728px;top:140px;' width='46' height='43' viewBox='0 0 46 43'><text x='1' y='15.5' font-family='Liberation Sans' font-size='20' fill='#4aa3e8'>A</text><text x='1.5' y='41.5' font-family='Liberation Sans' font-size='25' fill='#dcdcdc' transform='translate(0,0)'>Z</text><path d='M20,11 L44,11 L44,14.5 L35,24 L35,34.5 L29,34.5 L29,24 L20,14.5 Z' fill='none' stroke='#e0e0e0' stroke-width='1.7' stroke-linejoin='round'/></svg>
<span class="a t" style="left:1725.4px;top:191.6px;font-family:'Liberation Sans', sans-serif;font-size:17.5px;font-weight:normal;font-style:normal;color:#f3f3f3;letter-spacing:0.51px;">Sort &amp;</span>
<span class="a t" style="left:1724.5px;top:215.7px;font-family:'Liberation Sans', sans-serif;font-size:17.5px;font-weight:normal;font-style:normal;color:#f3f3f3;letter-spacing:-0.18px;">Filter</span>
<svg class='a' style='left:1768px;top:222.5px;' width='10' height='6.8' viewBox='0 0 10 6.8'><path d='M1,1 L5.0,5.8 L9,1' fill='none' stroke='#f3f3f3' stroke-width='1.9' stroke-linecap='round' stroke-linejoin='round'/></svg>
<svg class='a' style='left:1797px;top:139px;' width='48' height='48' viewBox='0 0 48 48'><circle cx='29' cy='17.5' r='15' fill='none' stroke='#e0e0e0' stroke-width='1.8'/><path d='M18.5,28.5 L2.5,44.5' stroke='#e0e0e0' stroke-width='1.8'/></svg>
<span class="a t" style="left:1795.5px;top:191.6px;font-family:'Liberation Sans', sans-serif;font-size:17.5px;font-weight:normal;font-style:normal;color:#f3f3f3;letter-spacing:0.30px;">Find &amp;</span>
<span class="a t" style="left:1790.6px;top:215.7px;font-family:'Liberation Sans', sans-serif;font-size:17.5px;font-weight:normal;font-style:normal;color:#f3f3f3;letter-spacing:-0.73px;">Select</span>
<svg class='a' style='left:1841px;top:222.5px;' width='10' height='6.8' viewBox='0 0 10 6.8'><path d='M1,1 L5.0,5.8 L9,1' fill='none' stroke='#f3f3f3' stroke-width='1.9' stroke-linecap='round' stroke-linejoin='round'/></svg>
<span class="a t" style="left:1682.4px;top:253.2px;font-family:'Liberation Sans', sans-serif;font-size:16.5px;font-weight:normal;font-style:normal;color:#ededed;letter-spacing:-0.41px;">Editing</span>
<div class='a' style='left:1868.7px;top:135px;width:1px;height:134px;background:#4d4d4d;'></div>
<svg class='a' style='left:1894px;top:140px;' width='44' height='44' viewBox='0 0 44 44'><rect x='1.5' y='1.5' width='40' height='40' fill='none' stroke='#c8502e' stroke-width='2.8'/><rect x='6' y='6' width='13.5' height='13.5' fill='none' stroke='#c8502e' stroke-width='2.4'/><rect x='24' y='6' width='13.5' height='13.5' fill='none' stroke='#c8502e' stroke-width='2.4'/><rect x='6' y='24' width='13.5' height='13.5' fill='none' stroke='#c8502e' stroke-width='2.4'/><rect x='24' y='24' width='13.5' height='13.5' fill='none' stroke='#c8502e' stroke-width='2.4'/></svg>
<span class="a t" style="left:1885.2px;top:191.6px;font-family:'Liberation Sans', sans-serif;font-size:17.5px;font-weight:normal;font-style:normal;color:#f3f3f3;letter-spacing:0.44px;">Add-ins</span>
<span class="a t" style="left:1888.5px;top:253.2px;font-family:'Liberation Sans', sans-serif;font-size:16.5px;font-weight:normal;font-style:normal;color:#ededed;letter-spacing:-0.54px;">Add-ins</span>
<div class='a' style='left:1963.3px;top:135px;width:1px;height:134px;background:#4d4d4d;'></div>
<svg class='a' style='left:1988px;top:140px;' width='44' height='44' viewBox='0 0 44 44'><rect x='1' y='1' width='41' height='41' fill='none' stroke='#bdbdbd' stroke-width='1.6'/><rect x='1' y='1' width='41' height='5' fill='#9a9a9a'/><path d='M1,14 L42,14 M1,28 L42,28 M14,6 L14,42 M28,6 L28,42' stroke='#8c8c8c' stroke-width='1.4'/><circle cx='21' cy='19' r='12' fill='#2a2a2a' stroke='#d0d0d0' stroke-width='1.8'/><path d='M29.5,27.5 L40,38' stroke='#d0d0d0' stroke-width='2.2'/><rect x='14.5' y='17' width='4' height='7' fill='#8a8a8a'/><rect x='19.5' y='12' width='4' height='12' fill='#d0d0d0'/><rect x='24.5' y='15' width='4' height='9' fill='#4aa3e8'/></svg>
<span class="a t" style="left:1979.8px;top:191.6px;font-family:'Liberation Sans', sans-serif;font-size:17.5px;font-weight:normal;font-style:normal;color:#f3f3f3;letter-spacing:-0.16px;">Analyze</span>
<span class="a t" style="left:1992.8px;top:215.7px;font-family:'Liberation Sans', sans-serif;font-size:17.5px;font-weight:normal;font-style:normal;color:#f3f3f3;letter-spacing:-0.49px;">Data</span>
<div class='a' style='left:2056.2px;top:135px;width:1px;height:134px;background:#4d4d4d;'></div>
<svg class='a' style='left:2849.5px;top:252.5px;' width='17' height='11' viewBox='0 0 17 11'><path d='M1,1 L8.5,10 L16,1' fill='none' stroke='#f0f0f0' stroke-width='1.6' stroke-linecap='round' stroke-linejoin='round'/></svg>
<svg class='a' style='left:2156px;top:142px;' width='114' height='114' viewBox='0 0 114 114'><circle cx='56.3' cy='56.8' r='56' fill='#ffffff'/><rect x='25.6' y='31.2' width='61.4' height='52.6' fill='#5b60e8'/><rect x='34' y='39.5' width='15.3' height='14.2' fill='#fff'/><rect x='60.3' y='39.5' width='18.7' height='14.2' fill='#fff'/><rect x='34' y='61.4' width='15.3' height='14.3' fill='#fff'/><rect x='60.3' y='61.4' width='18.7' height='14.3' fill='#fff'/></svg>
<span class="a t" style="left:2293.44px;top:150.42px;font-family:'Liberation Sans',sans-serif;font-size:51.5px;font-weight:bold;color:#fff;-webkit-text-stroke:1.6px #fff;transform:scaleX(0.7852);transform-origin:0 0;">F</span>
<span class="a t" style="left:2319.00px;top:150.42px;font-family:'Liberation Sans',sans-serif;font-size:51.5px;font-weight:bold;color:#fff;-webkit-text-stroke:1.6px #fff;transform:scaleX(0.9000);transform-origin:0 0;">I</span>
<span class="a t" style="left:2332.63px;top:150.42px;font-family:'Liberation Sans',sans-serif;font-size:51.5px;font-weight:bold;color:#fff;-webkit-text-stroke:1.6px #fff;transform:scaleX(0.9581);transform-origin:0 0;">N</span>
<span class="a t" style="left:2368.69px;top:150.42px;font-family:'Liberation Sans',sans-serif;font-size:51.5px;font-weight:bold;color:#fff;-webkit-text-stroke:1.6px #fff;transform:scaleX(1.0361);transform-origin:0 0;">M</span>
<span class="a t" style="left:2451.04px;top:150.42px;font-family:'Liberation Sans',sans-serif;font-size:51.5px;font-weight:bold;color:#fff;-webkit-text-stroke:1.6px #fff;transform:scaleX(0.9187);transform-origin:0 0;">D</span>
<span class="a t" style="left:2486.46px;top:150.42px;font-family:'Liberation Sans',sans-serif;font-size:51.5px;font-weight:bold;color:#fff;-webkit-text-stroke:1.6px #fff;transform:scaleX(0.6793);transform-origin:0 0;">E</span>
<span class="a t" style="left:2511.56px;top:150.42px;font-family:'Liberation Sans',sans-serif;font-size:51.5px;font-weight:bold;color:#fff;-webkit-text-stroke:1.6px #fff;transform:scaleX(0.6815);transform-origin:0 0;">L</span>
<span class="a t" style="left:2533.96px;top:150.42px;font-family:'Liberation Sans',sans-serif;font-size:51.5px;font-weight:bold;color:#fff;-webkit-text-stroke:1.6px #fff;transform:scaleX(0.8200);transform-origin:0 0;">S</span>
<span class="a t" style="left:2563.54px;top:150.42px;font-family:'Liberation Sans',sans-serif;font-size:51.5px;font-weight:bold;color:#fff;-webkit-text-stroke:1.6px #fff;transform:scaleX(0.6852);transform-origin:0 0;">L</span>
<span class="a t" style="left:2586.25px;top:150.42px;font-family:'Liberation Sans',sans-serif;font-size:51.5px;font-weight:bold;color:#fff;-webkit-text-stroke:1.6px #fff;transform:scaleX(0.9457);transform-origin:0 0;">A</span>
<span class="a t" style="left:2622.11px;top:150.42px;font-family:'Liberation Sans',sans-serif;font-size:51.5px;font-weight:bold;color:#fff;-webkit-text-stroke:1.6px #fff;transform:scaleX(0.8312);transform-origin:0 0;">B</span>
<svg class='a' style='left:2410px;top:150px;' width='44' height='52' viewBox='0 0 44 52'><circle cx='21.8' cy='30.1' r='13.7' fill='none' stroke='#fff' stroke-width='8.6'/><rect x='15.3' y='0' width='12' height='34' rx='6' fill='#292929'/><rect x='17' y='4.5' width='8.8' height='27.5' rx='4.4' fill='#fff'/></svg>
<span class="a t" style="left:2294.56px;top:205.66px;font-family:'Liberation Sans',sans-serif;font-size:34.5px;color:#fff;transform:scaleX(1.0368);transform-origin:0 0;">T</span>
<span class="a t" style="left:2335.96px;top:205.66px;font-family:'Liberation Sans',sans-serif;font-size:34.5px;color:#fff;transform:scaleX(1.1687);transform-origin:0 0;">e</span>
<span class="a t" style="left:2379.83px;top:205.66px;font-family:'Liberation Sans',sans-serif;font-size:34.5px;color:#fff;transform:scaleX(1.1840);transform-origin:0 0;">m</span>
<span class="a t" style="left:2436.76px;top:205.66px;font-family:'Liberation Sans',sans-serif;font-size:34.5px;color:#fff;transform:scaleX(1.1688);transform-origin:0 0;">p</span>
<span class="a t" style="left:2480.07px;top:205.66px;font-family:'Liberation Sans',sans-serif;font-size:34.5px;color:#fff;transform:scaleX(1.4667);transform-origin:0 0;">l</span>
<span class="a t" style="left:2509.31px;top:205.66px;font-family:'Liberation Sans',sans-serif;font-size:34.5px;color:#fff;transform:scaleX(1.0941);transform-origin:0 0;">a</span>
<span class="a t" style="left:2551.34px;top:205.66px;font-family:'Liberation Sans',sans-serif;font-size:34.5px;color:#fff;transform:scaleX(1.6625);transform-origin:0 0;">t</span>
<span class="a t" style="left:2586.98px;top:205.66px;font-family:'Liberation Sans',sans-serif;font-size:34.5px;color:#fff;transform:scaleX(1.1625);transform-origin:0 0;">e</span>
<span class="a t" style="left:2633.03px;top:205.66px;font-family:'Liberation Sans',sans-serif;font-size:34.5px;color:#fff;transform:scaleX(1.1667);transform-origin:0 0;">s</span>
<div class='a' style='left:11px;top:1670px;width:2880px;height:48px;background:#0a0a0a;'></div>
<div class='a' style='left:11px;top:1718px;width:2880px;height:33px;background:#141414;'></div>
<div class='a' style='left:11px;top:1718px;width:2880px;height:1px;background:#2e2e2e;'></div>
<svg class='a' style='left:45px;top:1685px;' width='12' height='18' viewBox='0 0 12 18'><path d='M9.5,1.5 L2.5,8.5 L9.5,15.5' fill='none' stroke='#e6e6e6' stroke-width='1.6'/></svg>
<svg class='a' style='left:94px;top:1685px;' width='12' height='18' viewBox='0 0 12 18'><path d='M2.5,1.5 L9.5,8.5 L2.5,15.5' fill='none' stroke='#e6e6e6' stroke-width='1.6'/></svg>
<svg class='a' style='left:137px;top:1689px;' width='20' height='8' viewBox='0 0 20 8'><circle cx='3' cy='4' r='2.1' fill='#e6e6e6'/><circle cx='9.5' cy='4' r='2.1' fill='#e6e6e6'/><circle cx='16' cy='4' r='2.1' fill='#e6e6e6'/></svg>
<div class='a' style='left:176.7px;top:1676.2px;width:88.90000000000003px;height:35.6px;background:#fff06b;border-radius:6px;'></div>
<span class="a t" style="left:190.9px;top:1684.7px;font-family:'Liberation Sans', sans-serif;font-size:19.5px;font-weight:normal;font-style:normal;color:#141414;transform:scaleX(1.0300);transform-origin:0 0;">Payroll</span>
<div class='a' style='left:271.95000000000005px;top:1684px;width:1px;height:21px;background:#4a4a4a;'></div>
<div class='a' style='left:279.3px;top:1676.2px;width:86.59999999999997px;height:35.6px;background:#fff06b;border-radius:6px;'></div>
<span class="a t" style="left:293.6px;top:1684.7px;font-family:'Liberation Sans', sans-serif;font-size:19.5px;font-weight:normal;font-style:normal;color:#141414;transform:scaleX(0.8940);transform-origin:0 0;">CAPEX</span>
<div class='a' style='left:372.1px;top:1684px;width:1px;height:21px;background:#4a4a4a;'></div>
<div class='a' style='left:379.3px;top:1676.2px;width:112.19999999999999px;height:35.6px;background:#fff06b;border-radius:6px;'></div>
<span class="a t" style="left:393.5px;top:1684.7px;font-family:'Liberation Sans', sans-serif;font-size:19.5px;font-weight:normal;font-style:normal;color:#141414;transform:scaleX(1.0280);transform-origin:0 0;">CapTable</span>
<div class='a' style='left:497.75px;top:1684px;width:1px;height:21px;background:#4a4a4a;'></div>
<div class='a' style='left:505px;top:1676.2px;width:89.60000000000002px;height:35.6px;background:#fff06b;border-radius:6px;'></div>
<span class="a t" style="left:519.2px;top:1684.7px;font-family:'Liberation Sans', sans-serif;font-size:19.5px;font-weight:normal;font-style:normal;color:#141414;transform:scaleX(1.0230);transform-origin:0 0;">Capital</span>
<div class='a' style='left:600.9000000000001px;top:1684px;width:1px;height:21px;background:#4a4a4a;'></div>
<div class='a' style='left:608.2px;top:1676.2px;width:41.5px;height:35.6px;background:#4cb2e7;border-radius:6px;'></div>
<span class="a t" style="left:622.5px;top:1684.7px;font-family:'Liberation Sans', sans-serif;font-size:19.5px;font-weight:normal;font-style:normal;color:#141414;transform:scaleX(0.7593);transform-origin:0 0;">IS</span>
<div class='a' style='left:655.85px;top:1684px;width:1px;height:21px;background:#4a4a4a;'></div>
<div class='a' style='left:663px;top:1676.2px;width:47.799999999999955px;height:35.6px;background:#4cb2e7;border-radius:6px;'></div>
<span class="a t" style="left:677.2px;top:1684.7px;font-family:'Liberation Sans', sans-serif;font-size:19.5px;font-weight:normal;font-style:normal;color:#141414;transform:scaleX(0.7808);transform-origin:0 0;">CF</span>
<div class='a' style='left:716.9px;top:1684px;width:1px;height:21px;background:#4a4a4a;'></div>
<div class='a' style='left:724px;top:1676.2px;width:47.89999999999998px;height:35.6px;background:#4cb2e7;border-radius:6px;'></div>
<span class="a t" style="left:738.2px;top:1684.7px;font-family:'Liberation Sans', sans-serif;font-size:19.5px;font-weight:normal;font-style:normal;color:#141414;transform:scaleX(0.7841);transform-origin:0 0;">BS</span>
<div class='a' style='left:778.05px;top:1684px;width:1px;height:21px;background:#4a4a4a;'></div>
<div class='a' style='left:785.2px;top:1676.2px;width:114.5px;height:35.6px;background:#4cb2e7;border-radius:6px;'></div>
<span class="a t" style="left:799.5px;top:1684.7px;font-family:'Liberation Sans', sans-serif;font-size:19.5px;font-weight:normal;font-style:normal;color:#141414;transform:scaleX(1.0032);transform-origin:0 0;">Scenarios</span>
<div class='a' style='left:905.85px;top:1684px;width:1px;height:21px;background:#4a4a4a;'></div>
<div class='a' style='left:913px;top:1676.2px;width:114.59999999999991px;height:35.6px;background:#4cb2e7;border-radius:6px;'></div>
<span class="a t" style="left:927.2px;top:1684.7px;font-family:'Liberation Sans', sans-serif;font-size:19.5px;font-weight:normal;font-style:normal;color:#141414;transform:scaleX(1.0905);transform-origin:0 0;">Valuation</span>
<div class='a' style='left:1033.8px;top:1684px;width:1px;height:21px;background:#4a4a4a;'></div>
<div class='a' style='left:1041px;top:1676.2px;width:113.5px;height:35.6px;background:#4cb2e7;border-radius:6px;'></div>
<span class="a t" style="left:1055.2px;top:1684.7px;font-family:'Liberation Sans', sans-serif;font-size:19.5px;font-weight:normal;font-style:normal;color:#141414;transform:scaleX(1.0307);transform-origin:0 0;">Summary</span>
<div class='a' style='left:1160.85px;top:1684px;width:1px;height:21px;background:#4a4a4a;'></div>
<div class='a' style='left:1168.2px;top:1676.2px;width:47.399999999999864px;height:35.6px;background:#4cb2e7;border-radius:6px;'></div>
<span class="a t" style="left:1182.5px;top:1684.7px;font-family:'Liberation Sans', sans-serif;font-size:19.5px;font-weight:normal;font-style:normal;color:#141414;transform:scaleX(0.7649);transform-origin:0 0;">BE</span>
<div class='a' style='left:1221.9499999999998px;top:1684px;width:1px;height:21px;background:#4a4a4a;'></div>
<div class='a' style='left:1229.3px;top:1676.2px;width:71.20000000000005px;height:35.6px;background:#4cb2e7;border-radius:6px;'></div>
<span class="a t" style="left:1243.6px;top:1684.7px;font-family:'Liberation Sans', sans-serif;font-size:19.5px;font-weight:normal;font-style:normal;color:#141414;transform:scaleX(0.8964);transform-origin:0 0;">ROIC</span>
<div class='a' style='left:1306.75px;top:1684px;width:1px;height:21px;background:#4a4a4a;'></div>
<div class='a' style='left:1314px;top:1676.2px;width:84.70000000000005px;height:35.6px;background:#4cb2e7;border-radius:6px;'></div>
<span class="a t" style="left:1328.2px;top:1684.7px;font-family:'Liberation Sans', sans-serif;font-size:19.5px;font-weight:normal;font-style:normal;color:#141414;transform:scaleX(0.9959);transform-origin:0 0;">Charts</span>
<div class='a' style='left:1404.85px;top:1684px;width:1px;height:21px;background:#4a4a4a;'></div>
<div class='a' style='left:1412px;top:1676.2px;width:63.59999999999991px;height:35.6px;background:#4cb2e7;border-radius:6px;'></div>
<span class="a t" style="left:1426.2px;top:1684.7px;font-family:'Liberation Sans', sans-serif;font-size:19.5px;font-weight:normal;font-style:normal;color:#141414;transform:scaleX(0.8765);transform-origin:0 0;">KPIs</span>
<div class='a' style='left:1481.8px;top:1684px;width:1px;height:21px;background:#4a4a4a;'></div>
<div class='a' style='left:1489px;top:1676.2px;width:168.79999999999995px;height:35.6px;background:#4cb2e7;border-radius:6px;'></div>
<span class="a t" style="left:1503.2px;top:1684.7px;font-family:'Liberation Sans', sans-serif;font-size:19.5px;font-weight:normal;font-style:normal;color:#141414;transform:scaleX(1.0106);transform-origin:0 0;">Sources &amp; Uses</span>
<div class='a' style='left:1663.8px;top:1684px;width:1px;height:21px;background:#4a4a4a;'></div>
<div class='a' style='left:1670.8px;top:1676.2px;width:82.79999999999995px;height:35.6px;background:#4cb2e7;border-radius:6px;'></div>
<span class="a t" style="left:1685.0px;top:1684.7px;font-family:'Liberation Sans', sans-serif;font-size:19.5px;font-weight:normal;font-style:normal;color:#141414;transform:scaleX(1.0003);transform-origin:0 0;">Ratios</span>
<div class='a' style='left:1759.8px;top:1684px;width:1px;height:21px;background:#4a4a4a;'></div>
<div class='a' style='left:1767px;top:1676.2px;width:95.70000000000005px;height:35.6px;background:#4cb2e7;border-radius:6px;'></div>
<span class="a t" style="left:1781.2px;top:1684.7px;font-family:'Liberation Sans', sans-serif;font-size:19.5px;font-weight:normal;font-style:normal;color:#141414;transform:scaleX(1.0485);transform-origin:0 0;">DuPont</span>
<div class='a' style='left:1869.0px;top:1684px;width:1px;height:21px;background:#4a4a4a;'></div>
<div class='a' style='left:1876.3px;top:1670.5px;width:150px;height:41px;background:linear-gradient(#ffffff,#dcecf8);border-radius:0 0 6px 6px;'></div>
<span class="a t" style="left:1887.5px;top:1678.6px;font-family:'Liberation Sans', sans-serif;font-size:19.5px;font-weight:normal;font-style:normal;color:#141414;letter-spacing:0.72px;">Top_Revenue</span>
<div class='a' style='left:1887.7px;top:1705.3px;width:127.6px;height:3px;background:#1e8a4b;'></div>
<div class='a' style='left:2032.5px;top:1684px;width:1px;height:21px;background:#4a4a4a;'></div>
<div class='a' style='left:2040.3px;top:1676.2px;width:31.4px;height:35.6px;overflow:hidden'><div style='position:absolute;left:0;top:0;width:60px;height:35.6px;background:#4cb2e7;border-radius:6px'></div><span style="position:absolute;left:8.5px;top:6px;font-family:'Liberation Sans',sans-serif;font-size:19.5px;color:#141414;white-space:pre">To</span></div>
<svg class='a' style='left:2086px;top:1689px;' width='20' height='8' viewBox='0 0 20 8'><circle cx='3' cy='4' r='2.1' fill='#e6e6e6'/><circle cx='9.5' cy='4' r='2.1' fill='#e6e6e6'/><circle cx='16' cy='4' r='2.1' fill='#e6e6e6'/></svg>
<svg class='a' style='left:2134px;top:1684px;' width='19' height='19' viewBox='0 0 19 19'><path d='M9.5,1 L9.5,18 M1,9.5 L18,9.5' stroke='#e6e6e6' stroke-width='1.6'/></svg>
<svg class='a' style='left:2189px;top:1685px;' width='6' height='18' viewBox='0 0 6 18'><circle cx='3' cy='3' r='1.8' fill='#e6e6e6'/><circle cx='3' cy='9' r='1.8' fill='#e6e6e6'/><circle cx='3' cy='15' r='1.8' fill='#e6e6e6'/></svg>
<div class='a' style='left:2216px;top:1680.4px;width:643px;height:25.6px;background:#151515;border-radius:13px;'></div>
<svg class='a' style='left:2222px;top:1686px;' width='14' height='14' viewBox='0 0 14 14'><path d='M11,1.5 L11,12.5 L2.5,7 Z' fill='#9a9a9a' stroke='#9a9a9a' stroke-width='1' stroke-linejoin='round'/></svg>
<div class='a' style='left:2242px;top:1687.2px;width:511.7px;height:12px;background:#9b9b9b;border-radius:6px;'></div>
<svg class='a' style='left:2840px;top:1686px;' width='14' height='14' viewBox='0 0 14 14'><path d='M3,1.5 L3,12.5 L11.5,7 Z' fill='#9a9a9a' stroke='#9a9a9a' stroke-width='1' stroke-linejoin='round'/></svg>
<svg class='a' style='left:2867px;top:285px;' width='18' height='14' viewBox='0 0 18 14'><path d='M2,11.5 L16,11.5 L9,2.5 Z' fill='#9a9a9a' stroke='#9a9a9a' stroke-width='1' stroke-linejoin='round'/></svg>
<div class='a' style='left:2869.7px;top:303.7px;width:12.6px;height:562px;background:#9b9b9b;border-radius:6px;'></div>
<svg class='a' style='left:2867px;top:1652px;' width='18' height='14' viewBox='0 0 18 14'><path d='M2,2.5 L16,2.5 L9,11.5 Z' fill='#9a9a9a' stroke='#9a9a9a' stroke-width='1' stroke-linejoin='round'/></svg>
<span class="a t" style="left:27.0px;top:1725.7px;font-family:'Liberation Sans', sans-serif;font-size:17px;font-weight:normal;font-style:normal;color:#e6e6e6;letter-spacing:-1.54px;">Ready</span>
<svg class='a' style='left:99px;top:1725px;' width='23' height='21' viewBox='0 0 23 21'><rect x='1' y='1' width='19' height='17' fill='none' stroke='#e6e6e6' stroke-width='1.4'/><path d='M1,5 L20,5 M4,8.5 L9,8.5 M4,12 L8,12 M4,15 L8,15' stroke='#e6e6e6' stroke-width='1.3'/><circle cx='15.5' cy='14.5' r='5' fill='#141414' stroke='#e6e6e6' stroke-width='1.4'/><circle cx='15.5' cy='14.5' r='2.2' fill='#e6e6e6'/></svg>
<svg class='a' style='left:145px;top:1723px;' width='24' height='24' viewBox='0 0 24 24'><circle cx='10' cy='3.5' r='2.6' fill='none' stroke='#e6e6e6' stroke-width='1.4'/><path d='M1.5,8 L18.5,8 M10,8 L10,14 L5,22 M10,14 L13,17' fill='none' stroke='#e6e6e6' stroke-width='1.5'/><path d='M14,15 L22,23 M22,15 L14,23' stroke='#e6e6e6' stroke-width='1.5'/></svg>
<span class="a t" style="left:173.3px;top:1725.7px;font-family:'Liberation Sans', sans-serif;font-size:17px;font-weight:bold;font-style:normal;color:#ffffff;letter-spacing:-0.63px;">Accessibility: Investigate</span>
<div class='a' style='left:2445px;top:1719px;width:60px;height:32px;background:#262626;'></div>
<svg class='a' style='left:2464px;top:1725px;' width='21' height='20' viewBox='0 0 21 20'><rect x='1' y='1' width='19' height='18' fill='none' stroke='#e6e6e6' stroke-width='1.5'/><path d='M7.3,1 L7.3,19 M13.6,1 L13.6,19 M1,7 L20,7 M1,13 L20,13' stroke='#e6e6e6' stroke-width='1.5'/></svg>
<svg class='a' style='left:2523px;top:1724px;' width='23' height='21' viewBox='0 0 23 21'><rect x='1' y='1' width='21' height='19' fill='none' stroke='#e6e6e6' stroke-width='1.6'/><rect x='5' y='4.5' width='13' height='12' fill='none' stroke='#e6e6e6' stroke-width='1.3'/><path d='M7.5,8 L15.5,8 M7.5,10.5 L15.5,10.5 M7.5,13 L15.5,13' stroke='#e6e6e6' stroke-width='1.1'/></svg>
<svg class='a' style='left:2583px;top:1724px;' width='23' height='21' viewBox='0 0 23 21'><rect x='1' y='1' width='21' height='19' fill='none' stroke='#e6e6e6' stroke-width='1.6'/><path d='M8,1 L8,11 L15,11 L15,1' fill='none' stroke='#e6e6e6' stroke-width='1.6'/></svg>
<div class='a' style='left:2632px;top:1734.5px;width:12px;height:1.4px;background:#d0d0d0;'></div>
<div class='a' style='left:2653px;top:1734.8px;width:147px;height:1.5px;background:#a0a0a0;'></div>
<div class='a' style='left:2726px;top:1730px;width:1.4px;height:10px;background:#a0a0a0;'></div>
<div class='a' style='left:2732px;top:1727px;width:8px;height:17px;background:#a8a8a8;border-radius:1px;'></div>
<svg class='a' style='left:2808px;top:1728px;' width='14' height='14' viewBox='0 0 14 14'><path d='M7,1 L7,13 M1,7 L13,7' stroke='#e6e6e6' stroke-width='1.4'/></svg>
<span class="a t" style="left:2840.0px;top:1726.4px;font-family:'Liberation Sans', sans-serif;font-size:17px;font-weight:normal;font-style:normal;color:#f0f0f0;letter-spacing:-1.83px;">140%</span>
</body></html>
